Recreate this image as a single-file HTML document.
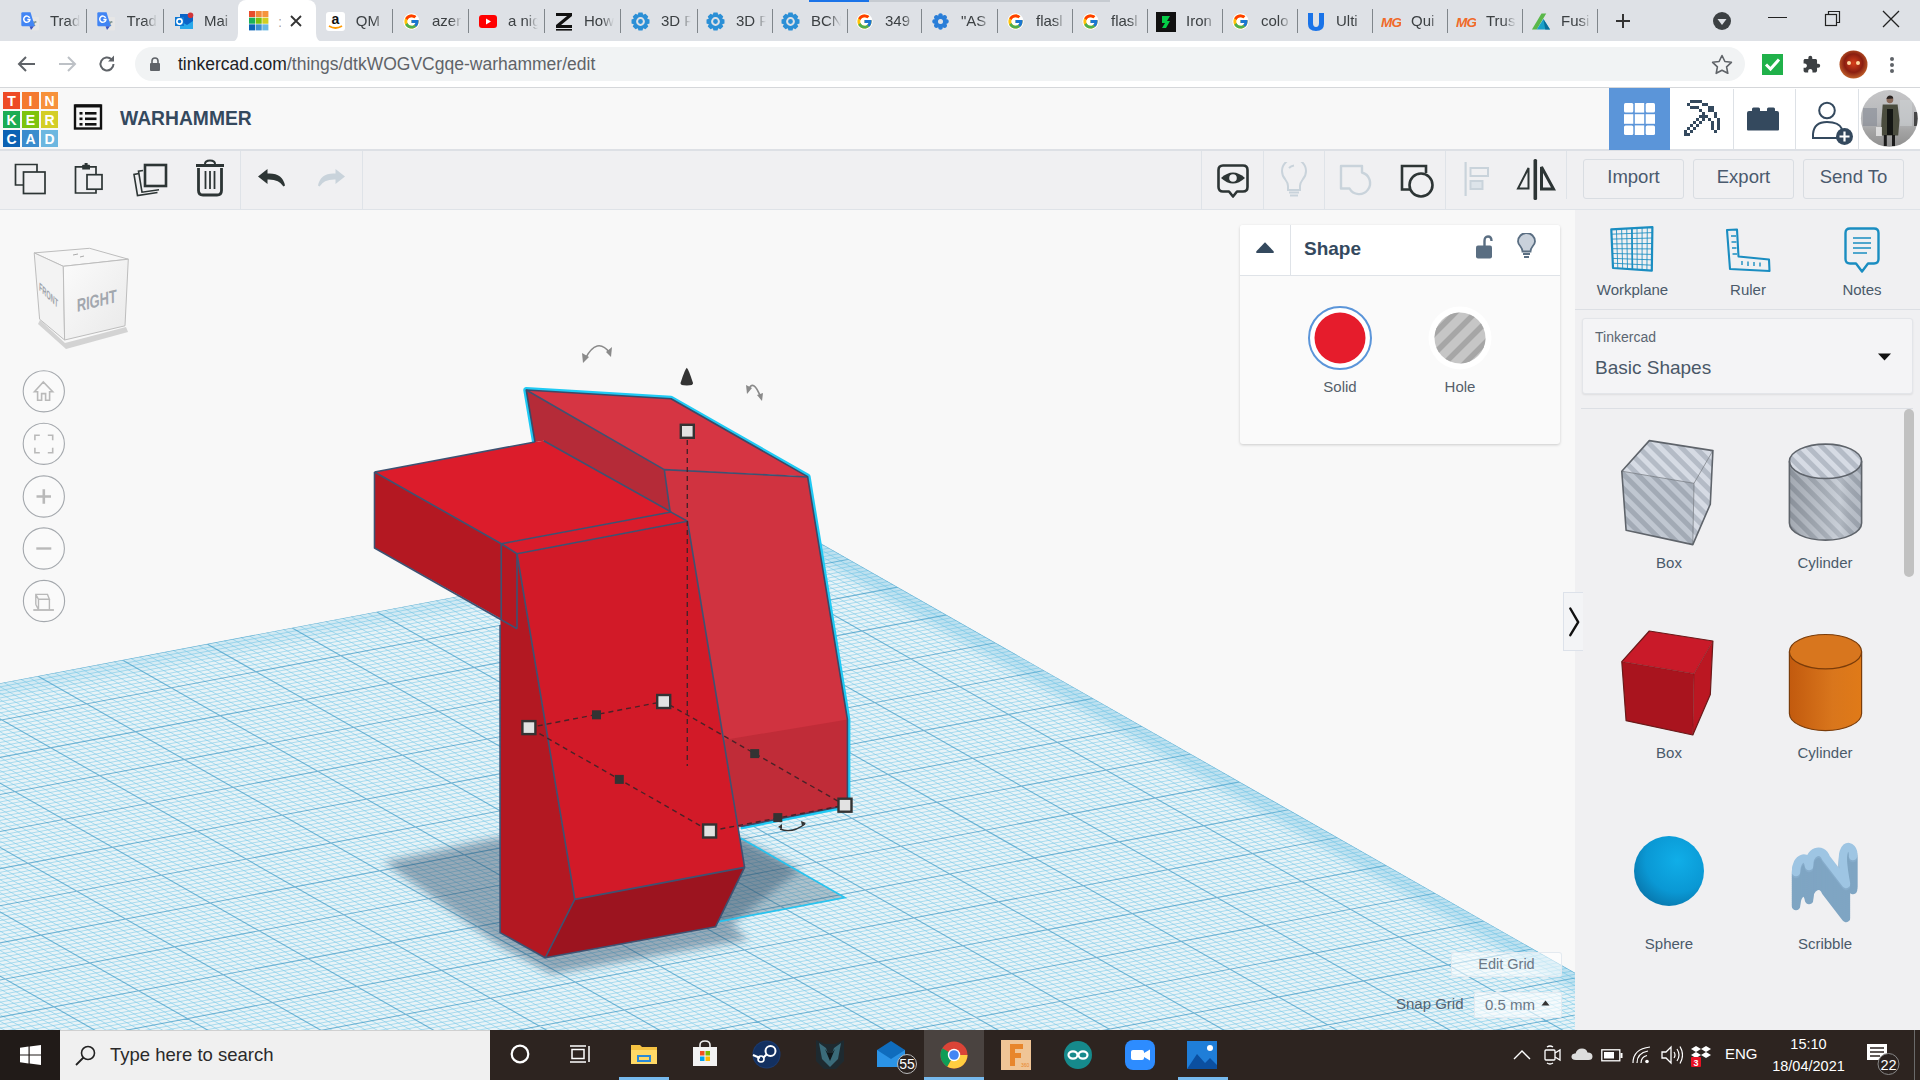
<!DOCTYPE html>
<html><head><meta charset="utf-8"><title>Tinkercad</title>
<style>
*{box-sizing:border-box}
html,body{margin:0;padding:0}
body{width:1920px;height:1080px;overflow:hidden;position:relative;font-family:"Liberation Sans",sans-serif;background:#f8f8f8;color:#333}
.a{position:absolute}
svg{display:block}
.tab{position:absolute;top:0;height:41px}
.tab .t{position:absolute;left:50px;top:12px;font-size:15px;color:#3c4043;white-space:nowrap;width:28px;overflow:hidden}
.tab .s{position:absolute;left:85px;top:13px;width:1px;height:18px;background:#7f8489}
.ico{position:absolute}
.lbl{position:absolute;font-size:15px;color:#4a5a6a;text-align:center;white-space:nowrap}
</style></head><body>

<div class="a" style="left:0;top:0;width:1920px;height:41px;background:#dee1e6"></div>
<div class="a" style="left:809px;top:0;width:60px;height:2px;background:#1a73e8"></div>
<div class="a" style="left:869px;top:0;width:241px;height:2px;background:#c6cbd1"></div>
<div class="a" style="left:238px;top:0;width:78px;height:42px;background:#fff;border-radius:8px 8px 0 0"></div>
<svg class="a" style="left:230px;top:33px" width="9" height="9"><path d="M0 9Q8 9 8 0V9z" fill="#fff"/></svg>
<svg class="a" style="left:315px;top:33px" width="9" height="9"><path d="M1 0Q1 9 9 9H1z" fill="#fff"/></svg>
<div class="a" style="left:19.5px;top:11px;width:20px;height:21px;display:flex;align-items:center;justify-content:center"><svg width="20" height="21" viewBox="0 0 20 21"><rect x="10" y="6" width="9" height="13.5" rx="1" fill="#e6e6e6"/><path d="M12 10.5l3 4.5M15.5 10.5l-3.5 5M11.5 11h5" stroke="#5f7a7a" stroke-width="0.9" fill="none"/><path d="M2.5 1.3H10.5L14.8 15.2H2.5Q1.3 15.2 1.3 14V2.5Q1.3 1.3 2.5 1.3Z" fill="#4285f4"/><path d="M9.5 15.2H14L11 19z" fill="#3b57c4"/><path d="M9.6 6.8A3.1 3.1 0 1 0 9.9 8.6H7.3" fill="none" stroke="#fff" stroke-width="1.5"/></svg></div>
<div class="a" style="left:50px;top:12px;width:30px;height:20px;overflow:hidden;font-size:15px;color:#3c4043;white-space:nowrap;-webkit-mask-image:linear-gradient(90deg,#000 60%,transparent 100%)">Trad</div>
<div class="a" style="left:86px;top:9px;width:1px;height:24px;background:#80868b"></div>
<div class="a" style="left:96.1px;top:11px;width:20px;height:21px;display:flex;align-items:center;justify-content:center"><svg width="20" height="21" viewBox="0 0 20 21"><rect x="10" y="6" width="9" height="13.5" rx="1" fill="#e6e6e6"/><path d="M12 10.5l3 4.5M15.5 10.5l-3.5 5M11.5 11h5" stroke="#5f7a7a" stroke-width="0.9" fill="none"/><path d="M2.5 1.3H10.5L14.8 15.2H2.5Q1.3 15.2 1.3 14V2.5Q1.3 1.3 2.5 1.3Z" fill="#4285f4"/><path d="M9.5 15.2H14L11 19z" fill="#3b57c4"/><path d="M9.6 6.8A3.1 3.1 0 1 0 9.9 8.6H7.3" fill="none" stroke="#fff" stroke-width="1.5"/></svg></div>
<div class="a" style="left:126.6px;top:12px;width:30px;height:20px;overflow:hidden;font-size:15px;color:#3c4043;white-space:nowrap;-webkit-mask-image:linear-gradient(90deg,#000 60%,transparent 100%)">Trad</div>
<div class="a" style="left:162.6px;top:9px;width:1px;height:24px;background:#80868b"></div>
<div class="a" style="left:173.5px;top:11px;width:20px;height:21px;display:flex;align-items:center;justify-content:center"><svg width="20" height="19" viewBox="0 0 20 19"><rect x="6" y="2" width="13" height="15" fill="#0a64c8"/><path d="M6 9l7 4 6-4v8H6z" fill="#28a8ea"/><rect x="1" y="5" width="9" height="9" fill="#0f78d4"/><circle cx="5.5" cy="9.5" r="2.6" fill="none" stroke="#fff" stroke-width="1.6"/><circle cx="16.5" cy="3.2" r="2.8" fill="#d13438"/></svg></div>
<div class="a" style="left:204px;top:12px;width:30px;height:20px;overflow:hidden;font-size:15px;color:#3c4043;white-space:nowrap;-webkit-mask-image:linear-gradient(90deg,#000 60%,transparent 100%)">Mai</div>
<div class="a" style="left:249px;top:11px"><svg width="20" height="20"><rect x="0.00" y="0.00" width="6.07" height="6.07" fill="#e84d2c"/><rect x="6.67" y="0.00" width="6.07" height="6.07" fill="#f38b3c"/><rect x="13.33" y="0.00" width="6.07" height="6.07" fill="#f6943c"/><rect x="0.00" y="6.67" width="6.07" height="6.07" fill="#1ab05a"/><rect x="6.67" y="6.67" width="6.07" height="6.07" fill="#79c00f"/><rect x="13.33" y="6.67" width="6.07" height="6.07" fill="#d2cd21"/><rect x="0.00" y="13.33" width="6.07" height="6.07" fill="#0b63b6"/><rect x="6.67" y="13.33" width="6.07" height="6.07" fill="#3c8fd1"/><rect x="13.33" y="13.33" width="6.07" height="6.07" fill="#6ab8e2"/></svg></div>
<div class="a" style="left:278px;top:13px;width:3px;height:16px;overflow:hidden;font-size:15px;color:#aaa">:</div>
<svg class="a" style="left:290px;top:15px" width="12" height="12"><path d="M1 1L11 11M11 1L1 11" stroke="#333" stroke-width="1.8"/></svg>
<div class="a" style="left:325.3px;top:11px;width:20px;height:21px;display:flex;align-items:center;justify-content:center"><svg width="19" height="19" viewBox="0 0 19 19"><rect x="0" y="0" width="19" height="19" rx="3" fill="#fff"/><text x="9.5" y="12" font-size="14" font-weight="bold" fill="#111" text-anchor="middle" font-family="Liberation Sans">a</text><path d="M3 14q6.5 4 13 0" stroke="#f90" stroke-width="1.8" fill="none"/></svg></div>
<div class="a" style="left:355.8px;top:12px;width:30px;height:20px;overflow:hidden;font-size:15px;color:#3c4043;white-space:nowrap;-webkit-mask-image:linear-gradient(90deg,#000 60%,transparent 100%)">QM</div>
<div class="a" style="left:391.8px;top:9px;width:1px;height:24px;background:#80868b"></div>
<div class="a" style="left:401.5px;top:11px;width:20px;height:21px;display:flex;align-items:center;justify-content:center"><svg width="17" height="17" viewBox="0 0 48 48"><circle cx="24" cy="24" r="23" fill="#fff"/><path d="M43.6 20.1H42V20H24v8h11.3C33.7 32.7 29.2 36 24 36c-6.6 0-12-5.4-12-12s5.4-12 12-12c3.1 0 5.8 1.2 7.9 3.1l5.7-5.7C34 6.1 29.3 4 24 4 13 4 4 13 4 24s9 20 20 20 20-9 20-20c0-1.3-.1-2.6-.4-3.9z" fill="#FFC107"/><path d="M6.3 14.7l6.6 4.8C14.7 15.1 19 12 24 12c3.1 0 5.8 1.2 7.9 3.1l5.7-5.7C34 6.1 29.3 4 24 4 16.3 4 9.7 8.3 6.3 14.7z" fill="#FF3D00"/><path d="M24 44c5.2 0 9.9-2 13.4-5.2l-6.2-5.2C29.2 35.1 26.7 36 24 36c-5.2 0-9.6-3.3-11.3-7.9l-6.5 5C9.5 39.6 16.2 44 24 44z" fill="#4CAF50"/><path d="M43.6 20.1H42V20H24v8h11.3c-.8 2.2-2.2 4.2-4.1 5.6l6.2 5.2C37 39.2 44 34 44 24c0-1.3-.1-2.6-.4-3.9z" fill="#1976D2"/></svg></div>
<div class="a" style="left:432px;top:12px;width:30px;height:20px;overflow:hidden;font-size:15px;color:#3c4043;white-space:nowrap;-webkit-mask-image:linear-gradient(90deg,#000 60%,transparent 100%)">azer</div>
<div class="a" style="left:468px;top:9px;width:1px;height:24px;background:#80868b"></div>
<div class="a" style="left:477.5px;top:11px;width:20px;height:21px;display:flex;align-items:center;justify-content:center"><svg width="18" height="13" viewBox="0 0 18 13"><rect width="18" height="13" rx="3" fill="#f00"/><path d="M7 3.5v6l5-3z" fill="#fff"/></svg></div>
<div class="a" style="left:508px;top:12px;width:30px;height:20px;overflow:hidden;font-size:15px;color:#3c4043;white-space:nowrap;-webkit-mask-image:linear-gradient(90deg,#000 60%,transparent 100%)">a nig</div>
<div class="a" style="left:544px;top:9px;width:1px;height:24px;background:#80868b"></div>
<div class="a" style="left:553.5px;top:11px;width:20px;height:21px;display:flex;align-items:center;justify-content:center"><svg width="18" height="20" viewBox="0 0 18 20"><path d="M1 1h16v3L6 13h11v3H1v-3L12 4H1z" fill="#111"/><rect x="1" y="17" width="16" height="1.6" fill="#111"/></svg></div>
<div class="a" style="left:584px;top:12px;width:30px;height:20px;overflow:hidden;font-size:15px;color:#3c4043;white-space:nowrap;-webkit-mask-image:linear-gradient(90deg,#000 60%,transparent 100%)">How</div>
<div class="a" style="left:620px;top:9px;width:1px;height:24px;background:#80868b"></div>
<div class="a" style="left:630.5px;top:11px;width:20px;height:21px;display:flex;align-items:center;justify-content:center"><svg width="19" height="19" viewBox="0 0 19 19"><polygon points="18.48,7.49 18.48,11.51 15.62,12.46 15.92,11.74 17.27,14.43 14.43,17.27 11.74,15.92 12.46,15.62 11.51,18.48 7.49,18.48 6.54,15.62 7.26,15.92 4.57,17.27 1.73,14.43 3.08,11.74 3.38,12.46 0.52,11.51 0.52,7.49 3.38,6.54 3.08,7.26 1.73,4.57 4.57,1.73 7.26,3.08 6.54,3.38 7.49,0.52 11.51,0.52 12.46,3.38 11.74,3.08 14.43,1.73 17.27,4.57 15.92,7.26 15.62,6.54" fill="#2b8fd6"/><circle cx="9.5" cy="9.5" r="3.4" fill="none" stroke="#dee1e6" stroke-width="2"/></svg></div>
<div class="a" style="left:661px;top:12px;width:30px;height:20px;overflow:hidden;font-size:15px;color:#3c4043;white-space:nowrap;-webkit-mask-image:linear-gradient(90deg,#000 60%,transparent 100%)">3D P</div>
<div class="a" style="left:697px;top:9px;width:1px;height:24px;background:#80868b"></div>
<div class="a" style="left:705.5px;top:11px;width:20px;height:21px;display:flex;align-items:center;justify-content:center"><svg width="19" height="19" viewBox="0 0 19 19"><polygon points="18.48,7.49 18.48,11.51 15.62,12.46 15.92,11.74 17.27,14.43 14.43,17.27 11.74,15.92 12.46,15.62 11.51,18.48 7.49,18.48 6.54,15.62 7.26,15.92 4.57,17.27 1.73,14.43 3.08,11.74 3.38,12.46 0.52,11.51 0.52,7.49 3.38,6.54 3.08,7.26 1.73,4.57 4.57,1.73 7.26,3.08 6.54,3.38 7.49,0.52 11.51,0.52 12.46,3.38 11.74,3.08 14.43,1.73 17.27,4.57 15.92,7.26 15.62,6.54" fill="#2b8fd6"/><circle cx="9.5" cy="9.5" r="3.4" fill="none" stroke="#dee1e6" stroke-width="2"/></svg></div>
<div class="a" style="left:736px;top:12px;width:30px;height:20px;overflow:hidden;font-size:15px;color:#3c4043;white-space:nowrap;-webkit-mask-image:linear-gradient(90deg,#000 60%,transparent 100%)">3D P</div>
<div class="a" style="left:772px;top:9px;width:1px;height:24px;background:#80868b"></div>
<div class="a" style="left:780.5px;top:11px;width:20px;height:21px;display:flex;align-items:center;justify-content:center"><svg width="19" height="19" viewBox="0 0 19 19"><polygon points="18.48,7.49 18.48,11.51 15.62,12.46 15.92,11.74 17.27,14.43 14.43,17.27 11.74,15.92 12.46,15.62 11.51,18.48 7.49,18.48 6.54,15.62 7.26,15.92 4.57,17.27 1.73,14.43 3.08,11.74 3.38,12.46 0.52,11.51 0.52,7.49 3.38,6.54 3.08,7.26 1.73,4.57 4.57,1.73 7.26,3.08 6.54,3.38 7.49,0.52 11.51,0.52 12.46,3.38 11.74,3.08 14.43,1.73 17.27,4.57 15.92,7.26 15.62,6.54" fill="#2b8fd6"/><circle cx="9.5" cy="9.5" r="3.4" fill="none" stroke="#dee1e6" stroke-width="2"/></svg></div>
<div class="a" style="left:811px;top:12px;width:30px;height:20px;overflow:hidden;font-size:15px;color:#3c4043;white-space:nowrap;-webkit-mask-image:linear-gradient(90deg,#000 60%,transparent 100%)">BCN</div>
<div class="a" style="left:847px;top:9px;width:1px;height:24px;background:#80868b"></div>
<div class="a" style="left:854.5px;top:11px;width:20px;height:21px;display:flex;align-items:center;justify-content:center"><svg width="17" height="17" viewBox="0 0 48 48"><circle cx="24" cy="24" r="23" fill="#fff"/><path d="M43.6 20.1H42V20H24v8h11.3C33.7 32.7 29.2 36 24 36c-6.6 0-12-5.4-12-12s5.4-12 12-12c3.1 0 5.8 1.2 7.9 3.1l5.7-5.7C34 6.1 29.3 4 24 4 13 4 4 13 4 24s9 20 20 20 20-9 20-20c0-1.3-.1-2.6-.4-3.9z" fill="#FFC107"/><path d="M6.3 14.7l6.6 4.8C14.7 15.1 19 12 24 12c3.1 0 5.8 1.2 7.9 3.1l5.7-5.7C34 6.1 29.3 4 24 4 16.3 4 9.7 8.3 6.3 14.7z" fill="#FF3D00"/><path d="M24 44c5.2 0 9.9-2 13.4-5.2l-6.2-5.2C29.2 35.1 26.7 36 24 36c-5.2 0-9.6-3.3-11.3-7.9l-6.5 5C9.5 39.6 16.2 44 24 44z" fill="#4CAF50"/><path d="M43.6 20.1H42V20H24v8h11.3c-.8 2.2-2.2 4.2-4.1 5.6l6.2 5.2C37 39.2 44 34 44 24c0-1.3-.1-2.6-.4-3.9z" fill="#1976D2"/></svg></div>
<div class="a" style="left:885px;top:12px;width:30px;height:20px;overflow:hidden;font-size:15px;color:#3c4043;white-space:nowrap;-webkit-mask-image:linear-gradient(90deg,#000 60%,transparent 100%)">349</div>
<div class="a" style="left:921px;top:9px;width:1px;height:24px;background:#80868b"></div>
<div class="a" style="left:930.5px;top:11px;width:20px;height:21px;display:flex;align-items:center;justify-content:center"><svg width="19" height="19" viewBox="0 0 19 19"><ellipse cx="14.50" cy="9.50" rx="3.2" ry="2.4" transform="rotate(0 14.50 9.50)" fill="#2a7ed8"/><ellipse cx="13.04" cy="13.04" rx="3.2" ry="2.4" transform="rotate(45 13.04 13.04)" fill="#2a7ed8"/><ellipse cx="9.50" cy="14.50" rx="3.2" ry="2.4" transform="rotate(90 9.50 14.50)" fill="#2a7ed8"/><ellipse cx="5.96" cy="13.04" rx="3.2" ry="2.4" transform="rotate(135 5.96 13.04)" fill="#2a7ed8"/><ellipse cx="4.50" cy="9.50" rx="3.2" ry="2.4" transform="rotate(180 4.50 9.50)" fill="#2a7ed8"/><ellipse cx="5.96" cy="5.96" rx="3.2" ry="2.4" transform="rotate(225 5.96 5.96)" fill="#2a7ed8"/><ellipse cx="9.50" cy="4.50" rx="3.2" ry="2.4" transform="rotate(270 9.50 4.50)" fill="#2a7ed8"/><ellipse cx="13.04" cy="5.96" rx="3.2" ry="2.4" transform="rotate(315 13.04 5.96)" fill="#2a7ed8"/><circle cx="9.5" cy="9.5" r="2.5" fill="#dee1e6"/></svg></div>
<div class="a" style="left:961px;top:12px;width:30px;height:20px;overflow:hidden;font-size:15px;color:#3c4043;white-space:nowrap;-webkit-mask-image:linear-gradient(90deg,#000 60%,transparent 100%)">"AS</div>
<div class="a" style="left:997px;top:9px;width:1px;height:24px;background:#80868b"></div>
<div class="a" style="left:1005.5px;top:11px;width:20px;height:21px;display:flex;align-items:center;justify-content:center"><svg width="17" height="17" viewBox="0 0 48 48"><circle cx="24" cy="24" r="23" fill="#fff"/><path d="M43.6 20.1H42V20H24v8h11.3C33.7 32.7 29.2 36 24 36c-6.6 0-12-5.4-12-12s5.4-12 12-12c3.1 0 5.8 1.2 7.9 3.1l5.7-5.7C34 6.1 29.3 4 24 4 13 4 4 13 4 24s9 20 20 20 20-9 20-20c0-1.3-.1-2.6-.4-3.9z" fill="#FFC107"/><path d="M6.3 14.7l6.6 4.8C14.7 15.1 19 12 24 12c3.1 0 5.8 1.2 7.9 3.1l5.7-5.7C34 6.1 29.3 4 24 4 16.3 4 9.7 8.3 6.3 14.7z" fill="#FF3D00"/><path d="M24 44c5.2 0 9.9-2 13.4-5.2l-6.2-5.2C29.2 35.1 26.7 36 24 36c-5.2 0-9.6-3.3-11.3-7.9l-6.5 5C9.5 39.6 16.2 44 24 44z" fill="#4CAF50"/><path d="M43.6 20.1H42V20H24v8h11.3c-.8 2.2-2.2 4.2-4.1 5.6l6.2 5.2C37 39.2 44 34 44 24c0-1.3-.1-2.6-.4-3.9z" fill="#1976D2"/></svg></div>
<div class="a" style="left:1036px;top:12px;width:30px;height:20px;overflow:hidden;font-size:15px;color:#3c4043;white-space:nowrap;-webkit-mask-image:linear-gradient(90deg,#000 60%,transparent 100%)">flasl</div>
<div class="a" style="left:1072px;top:9px;width:1px;height:24px;background:#80868b"></div>
<div class="a" style="left:1080.5px;top:11px;width:20px;height:21px;display:flex;align-items:center;justify-content:center"><svg width="17" height="17" viewBox="0 0 48 48"><circle cx="24" cy="24" r="23" fill="#fff"/><path d="M43.6 20.1H42V20H24v8h11.3C33.7 32.7 29.2 36 24 36c-6.6 0-12-5.4-12-12s5.4-12 12-12c3.1 0 5.8 1.2 7.9 3.1l5.7-5.7C34 6.1 29.3 4 24 4 13 4 4 13 4 24s9 20 20 20 20-9 20-20c0-1.3-.1-2.6-.4-3.9z" fill="#FFC107"/><path d="M6.3 14.7l6.6 4.8C14.7 15.1 19 12 24 12c3.1 0 5.8 1.2 7.9 3.1l5.7-5.7C34 6.1 29.3 4 24 4 16.3 4 9.7 8.3 6.3 14.7z" fill="#FF3D00"/><path d="M24 44c5.2 0 9.9-2 13.4-5.2l-6.2-5.2C29.2 35.1 26.7 36 24 36c-5.2 0-9.6-3.3-11.3-7.9l-6.5 5C9.5 39.6 16.2 44 24 44z" fill="#4CAF50"/><path d="M43.6 20.1H42V20H24v8h11.3c-.8 2.2-2.2 4.2-4.1 5.6l6.2 5.2C37 39.2 44 34 44 24c0-1.3-.1-2.6-.4-3.9z" fill="#1976D2"/></svg></div>
<div class="a" style="left:1111px;top:12px;width:30px;height:20px;overflow:hidden;font-size:15px;color:#3c4043;white-space:nowrap;-webkit-mask-image:linear-gradient(90deg,#000 60%,transparent 100%)">flasl</div>
<div class="a" style="left:1147px;top:9px;width:1px;height:24px;background:#80868b"></div>
<div class="a" style="left:1155.5px;top:11px;width:20px;height:21px;display:flex;align-items:center;justify-content:center"><svg width="20" height="20" viewBox="0 0 20 20"><rect width="20" height="20" fill="#111"/><path d="M6 4h8l-3 5h3l-4 7H6l3-5H6z" fill="#05cc47"/></svg></div>
<div class="a" style="left:1186px;top:12px;width:30px;height:20px;overflow:hidden;font-size:15px;color:#3c4043;white-space:nowrap;-webkit-mask-image:linear-gradient(90deg,#000 60%,transparent 100%)">Iron</div>
<div class="a" style="left:1222px;top:9px;width:1px;height:24px;background:#80868b"></div>
<div class="a" style="left:1230.5px;top:11px;width:20px;height:21px;display:flex;align-items:center;justify-content:center"><svg width="17" height="17" viewBox="0 0 48 48"><circle cx="24" cy="24" r="23" fill="#fff"/><path d="M43.6 20.1H42V20H24v8h11.3C33.7 32.7 29.2 36 24 36c-6.6 0-12-5.4-12-12s5.4-12 12-12c3.1 0 5.8 1.2 7.9 3.1l5.7-5.7C34 6.1 29.3 4 24 4 13 4 4 13 4 24s9 20 20 20 20-9 20-20c0-1.3-.1-2.6-.4-3.9z" fill="#FFC107"/><path d="M6.3 14.7l6.6 4.8C14.7 15.1 19 12 24 12c3.1 0 5.8 1.2 7.9 3.1l5.7-5.7C34 6.1 29.3 4 24 4 16.3 4 9.7 8.3 6.3 14.7z" fill="#FF3D00"/><path d="M24 44c5.2 0 9.9-2 13.4-5.2l-6.2-5.2C29.2 35.1 26.7 36 24 36c-5.2 0-9.6-3.3-11.3-7.9l-6.5 5C9.5 39.6 16.2 44 24 44z" fill="#4CAF50"/><path d="M43.6 20.1H42V20H24v8h11.3c-.8 2.2-2.2 4.2-4.1 5.6l6.2 5.2C37 39.2 44 34 44 24c0-1.3-.1-2.6-.4-3.9z" fill="#1976D2"/></svg></div>
<div class="a" style="left:1261px;top:12px;width:30px;height:20px;overflow:hidden;font-size:15px;color:#3c4043;white-space:nowrap;-webkit-mask-image:linear-gradient(90deg,#000 60%,transparent 100%)">colo</div>
<div class="a" style="left:1297px;top:9px;width:1px;height:24px;background:#80868b"></div>
<div class="a" style="left:1305.5px;top:11px;width:20px;height:21px;display:flex;align-items:center;justify-content:center"><svg width="20" height="20" viewBox="0 0 20 20"><path d="M2 1h5v10q0 4 3 4t3-4V1h5v11q0 7-8 7T2 12z" fill="#1a73e8"/></svg></div>
<div class="a" style="left:1336px;top:12px;width:30px;height:20px;overflow:hidden;font-size:15px;color:#3c4043;white-space:nowrap;-webkit-mask-image:linear-gradient(90deg,#000 60%,transparent 100%)">Ulti</div>
<div class="a" style="left:1372px;top:9px;width:1px;height:24px;background:#80868b"></div>
<div class="a" style="left:1380.5px;top:11px;width:20px;height:21px;display:flex;align-items:center;justify-content:center"><svg width="22" height="16" viewBox="0 0 22 16"><text x="0" y="14" font-size="15" font-weight="bold" font-style="italic" fill="#f06a2a" font-family="Liberation Sans" letter-spacing="-1">MG</text></svg></div>
<div class="a" style="left:1411px;top:12px;width:30px;height:20px;overflow:hidden;font-size:15px;color:#3c4043;white-space:nowrap;-webkit-mask-image:linear-gradient(90deg,#000 60%,transparent 100%)">Qui</div>
<div class="a" style="left:1447px;top:9px;width:1px;height:24px;background:#80868b"></div>
<div class="a" style="left:1455.5px;top:11px;width:20px;height:21px;display:flex;align-items:center;justify-content:center"><svg width="22" height="16" viewBox="0 0 22 16"><text x="0" y="14" font-size="15" font-weight="bold" font-style="italic" fill="#f06a2a" font-family="Liberation Sans" letter-spacing="-1">MG</text></svg></div>
<div class="a" style="left:1486px;top:12px;width:30px;height:20px;overflow:hidden;font-size:15px;color:#3c4043;white-space:nowrap;-webkit-mask-image:linear-gradient(90deg,#000 60%,transparent 100%)">Trus</div>
<div class="a" style="left:1522px;top:9px;width:1px;height:24px;background:#80868b"></div>
<div class="a" style="left:1530.5px;top:11px;width:20px;height:21px;display:flex;align-items:center;justify-content:center"><svg width="21" height="19" viewBox="0 0 21 19"><path d="M1 18L11 1h5L6 18z" fill="#5ab84a"/><path d="M6 18l7-11 7 11z" fill="#1aa0c8"/><path d="M13 7l7 11h-5z" fill="#0a6e9a"/></svg></div>
<div class="a" style="left:1561px;top:12px;width:30px;height:20px;overflow:hidden;font-size:15px;color:#3c4043;white-space:nowrap;-webkit-mask-image:linear-gradient(90deg,#000 60%,transparent 100%)">Fusi</div>
<div class="a" style="left:1597px;top:9px;width:1px;height:24px;background:#80868b"></div>
<svg class="a" style="left:1615px;top:13px" width="16" height="16"><path d="M8 1V15M1 8H15" stroke="#333" stroke-width="2"/></svg>
<svg class="a" style="left:1712px;top:11px" width="20" height="20"><circle cx="10" cy="10" r="9" fill="#3c4043"/><path d="M5.5 8h9L10 14z" fill="#dee1e6"/></svg>
<div class="a" style="left:1768px;top:17px;width:19px;height:1px;background:#222"></div>
<svg class="a" style="left:1824px;top:10px" width="18" height="18"><rect x="1.5" y="4.5" width="11" height="11" fill="none" stroke="#222" stroke-width="1.2"/><path d="M4.5 4.5V1.5H15.5V12.5H12.5" fill="none" stroke="#222" stroke-width="1.2"/></svg>
<svg class="a" style="left:1882px;top:10px" width="18" height="18"><path d="M1 1L17 17M17 1L1 17" stroke="#222" stroke-width="1.3"/></svg>
<div class="a" style="left:0;top:41px;width:1920px;height:46px;background:#fff"></div>
<div class="a" style="left:0;top:87px;width:1920px;height:1px;background:#d5d7da"></div>
<svg class="a" style="left:17px;top:54px" width="20" height="20"><path d="M18 10H3M9 3L2 10L9 17" fill="none" stroke="#5f6368" stroke-width="2"/></svg>
<svg class="a" style="left:57px;top:54px" width="20" height="20"><path d="M2 10H17M11 3L18 10L11 17" fill="none" stroke="#bdc1c6" stroke-width="2"/></svg>
<svg class="a" style="left:97px;top:54px" width="20" height="20"><path d="M16.5 10A6.5 6.5 0 1 1 14.6 5.4" fill="none" stroke="#5f6368" stroke-width="2"/><path d="M17 1.5V7.5H11z" fill="#5f6368"/></svg>
<div class="a" style="left:135px;top:47px;width:1610px;height:34px;border-radius:17px;background:#f1f3f4"></div>
<svg class="a" style="left:149px;top:56px" width="12" height="15"><path d="M3 7V5a3 3 0 0 1 6 0V7" fill="none" stroke="#5f6368" stroke-width="1.6"/><rect x="1" y="7" width="10" height="8" rx="1" fill="#5f6368"/></svg>
<div class="a" style="left:178px;top:54px;font-size:17.5px;color:#202124;white-space:nowrap;letter-spacing:0px">tinkercad.com<span style="color:#5f6368">/things/dtkWOGVCgqe-warhammer/edit</span></div>
<svg class="a" style="left:1711px;top:54px" width="22" height="21"><path d="M11 1.5l2.9 6 6.5.8-4.8 4.5 1.2 6.5L11 16.2l-5.8 3.1 1.2-6.5L1.6 8.3l6.5-.8z" fill="none" stroke="#5f6368" stroke-width="1.6" stroke-linejoin="round"/></svg>
<svg class="a" style="left:1762px;top:54px" width="21" height="21"><rect width="21" height="21" fill="#20b14a"/><path d="M4 10.5l4.5 4.5L17 5.5" fill="none" stroke="#fff" stroke-width="3"/></svg>
<svg class="a" style="left:1802px;top:55px" width="19" height="19" viewBox="0 0 24 24"><path d="M20.5 11H19V7c0-1.1-.9-2-2-2h-4V3.5a2.5 2.5 0 0 0-5 0V5H4c-1.1 0-2 .9-2 2v3.8h1.5c1.5 0 2.7 1.2 2.7 2.7S5 16.2 3.5 16.2H2V20c0 1.1.9 2 2 2h3.8v-1.5c0-1.5 1.2-2.7 2.7-2.7s2.7 1.2 2.7 2.7V22H17c1.1 0 2-.9 2-2v-4h1.5a2.5 2.5 0 0 0 0-5z" fill="#3c4043"/></svg>
<svg class="a" style="left:1839px;top:50px" width="29" height="29"><defs><radialGradient id="av" cx="50%" cy="45%" r="55%"><stop offset="0" stop-color="#d9401a"/><stop offset="0.6" stop-color="#8a1e10"/><stop offset="1" stop-color="#c0602a"/></radialGradient></defs><circle cx="14.5" cy="14.5" r="14" fill="url(#av)"/><circle cx="10" cy="13" r="2" fill="#ffd9a0"/><circle cx="19" cy="13" r="2" fill="#ffd9a0"/></svg>
<svg class="a" style="left:1889px;top:56px" width="6" height="18"><circle cx="3" cy="3" r="2" fill="#5f6368"/><circle cx="3" cy="9" r="2" fill="#5f6368"/><circle cx="3" cy="15" r="2" fill="#5f6368"/></svg>
<!-- Tinkercad header -->
<div class="a" style="left:0;top:88px;width:1920px;height:62px;background:#f8f8f8"></div>
<div class="a" style="left:1670px;top:88px;width:250px;height:62px;background:#fff"></div>
<div class="a" style="left:0;top:149px;width:1920px;height:2px;background:#dde0e5"></div>
<svg class="a" style="left:3px;top:92px" width="55" height="55" viewBox="0 0 55 55">
<rect x="0" y="0" width="17" height="17" fill="#ee4a25"/><rect x="19" y="0" width="17" height="17" fill="#f47a30"/><rect x="38" y="0" width="17" height="17" fill="#f7923b"/>
<rect x="0" y="19" width="17" height="17" fill="#1bac54"/><rect x="19" y="19" width="17" height="17" fill="#7ec30d"/><rect x="38" y="19" width="17" height="17" fill="#d4ce27"/>
<rect x="0" y="38" width="17" height="17" fill="#0b62b4"/><rect x="19" y="38" width="17" height="17" fill="#3b8ccd"/><rect x="38" y="38" width="17" height="17" fill="#6db7e0"/>
<g font-family="Liberation Sans" font-weight="bold" font-size="14" fill="#fff" text-anchor="middle">
<text x="8.5" y="13.5">T</text><text x="27.5" y="13.5">I</text><text x="46.5" y="13.5">N</text>
<text x="8.5" y="32.5">K</text><text x="27.5" y="32.5">E</text><text x="46.5" y="32.5">R</text>
<text x="8.5" y="51.5">C</text><text x="27.5" y="51.5">A</text><text x="46.5" y="51.5">D</text></g>
</svg>
<svg class="a" style="left:73px;top:103px" width="30" height="28" viewBox="0 0 30 28">
<rect x="2" y="2.5" width="26" height="23" fill="none" stroke="#111" stroke-width="2.4"/><rect x="2" y="1.5" width="26" height="3" fill="#111"/>
<rect x="6.5" y="9" width="3" height="2.6" fill="#111"/><rect x="12" y="9" width="11.5" height="2.6" fill="#111"/>
<rect x="6.5" y="14.5" width="3" height="2.6" fill="#111"/><rect x="12" y="14.5" width="11.5" height="2.6" fill="#111"/>
<rect x="6.5" y="20" width="3" height="2.6" fill="#111"/><rect x="12" y="20" width="11.5" height="2.6" fill="#111"/>
</svg>
<div class="a" style="left:120px;top:108px;font-size:19.3px;font-weight:bold;color:#34495e;letter-spacing:0px;white-space:nowrap">WARHAMMER</div>
<!-- right icons -->
<div class="a" style="left:1609px;top:88px;width:61px;height:62px;background:#5b95d9"></div>
<svg class="a" style="left:1624px;top:103px" width="31" height="32" viewBox="0 0 31 32">
<g fill="#fff"><rect x="0" y="0" width="9.3" height="9.6" rx="1.5"/><rect x="10.8" y="0" width="9.4" height="9.6"/><rect x="21.7" y="0" width="9.3" height="9.6" rx="1.5"/>
<rect x="0" y="11.2" width="9.3" height="9.6"/><rect x="10.8" y="11.2" width="9.4" height="9.6"/><rect x="21.7" y="11.2" width="9.3" height="9.6"/>
<rect x="0" y="22.4" width="9.3" height="9.6" rx="1.5"/><rect x="10.8" y="22.4" width="9.4" height="9.6"/><rect x="21.7" y="22.4" width="9.3" height="9.6" rx="1.5"/></g>
</svg>
<svg class="a" style="left:1683.5px;top:100.3px" width="36" height="36" viewBox="0 0 36 36" shape-rendering="crispEdges"><g fill="#34495e"><rect x="6" y="0" width="3" height="3"/><rect x="9" y="0" width="3" height="3"/><rect x="12" y="0" width="3" height="3"/><rect x="15" y="0" width="3" height="3"/><rect x="3" y="3" width="3" height="3"/><rect x="18" y="3" width="3" height="3"/><rect x="21" y="3" width="3" height="3"/><rect x="6" y="6" width="3" height="3"/><rect x="9" y="6" width="3" height="3"/><rect x="12" y="6" width="3" height="3"/><rect x="24" y="6" width="3" height="3"/><rect x="27" y="6" width="3" height="3"/><rect x="15" y="9" width="3" height="3"/><rect x="24" y="9" width="3" height="3"/><rect x="27" y="9" width="3" height="3"/><rect x="18" y="12" width="3" height="3"/><rect x="30" y="12" width="3" height="3"/><rect x="15" y="15" width="3" height="3"/><rect x="18" y="15" width="3" height="3"/><rect x="21" y="15" width="3" height="3"/><rect x="30" y="15" width="3" height="3"/><rect x="12" y="18" width="3" height="3"/><rect x="18" y="18" width="3" height="3"/><rect x="24" y="18" width="3" height="3"/><rect x="33" y="18" width="3" height="3"/><rect x="9" y="21" width="3" height="3"/><rect x="15" y="21" width="3" height="3"/><rect x="27" y="21" width="3" height="3"/><rect x="33" y="21" width="3" height="3"/><rect x="6" y="24" width="3" height="3"/><rect x="12" y="24" width="3" height="3"/><rect x="27" y="24" width="3" height="3"/><rect x="33" y="24" width="3" height="3"/><rect x="3" y="27" width="3" height="3"/><rect x="9" y="27" width="3" height="3"/><rect x="27" y="27" width="3" height="3"/><rect x="33" y="27" width="3" height="3"/><rect x="0" y="30" width="3" height="3"/><rect x="6" y="30" width="3" height="3"/><rect x="30" y="30" width="3" height="3"/><rect x="0" y="33" width="3" height="3"/><rect x="3" y="33" width="3" height="3"/></g></svg>
<div class="a" style="left:1733px;top:89px;width:1px;height:60px;background:#dde1e6"></div>
<svg class="a" style="left:1747px;top:105px" width="33" height="27" viewBox="0 0 33 27">
<path d="M5 4q0-1.5 1.5-1.5h5q1.5 0 1.5 1.5v2h7v-2q0-1.5 1.5-1.5h5q1.5 0 1.5 1.5v2h2q2 0 2 2v16.5q0 1-1 1H1q-1 0-1-1V8q0-2 2-2h3z" fill="#34495e"/></svg>
<div class="a" style="left:1795px;top:89px;width:1px;height:60px;background:#dde1e6"></div>
<svg class="a" style="left:1811px;top:100px" width="44" height="46" viewBox="0 0 44 46">
<circle cx="16" cy="10.5" r="7.8" fill="none" stroke="#34495e" stroke-width="2"/>
<path d="M31 29Q28 22 16 22Q3 22 2 34v4h24" fill="none" stroke="#34495e" stroke-width="2"/>
<circle cx="33.5" cy="36.5" r="8.5" fill="#34495e"/><path d="M33.5 31.5v10M28.5 36.5h10" stroke="#fff" stroke-width="2.2"/></svg>
<div class="a" style="left:1858px;top:89px;width:1px;height:60px;background:#dde1e6"></div>
<svg class="a" style="left:1860px;top:90px" width="58" height="58" viewBox="0 0 58 58">
<defs><clipPath id="avc"><circle cx="29.3" cy="28.4" r="28.4"/></clipPath>
<linearGradient id="avg" x1="0" y1="0" x2="0" y2="1"><stop offset="0" stop-color="#c6c6c8"/><stop offset="0.55" stop-color="#b4b5b8"/><stop offset="0.7" stop-color="#a4a4a4"/><stop offset="1" stop-color="#8e8e8e"/></linearGradient></defs>
<g clip-path="url(#avc)"><rect width="58" height="58" fill="url(#avg)"/>
<rect x="3" y="18" width="14" height="18" fill="#7f8590" opacity="0.55"/><rect x="40" y="10" width="12" height="26" fill="#d0d3d6" opacity="0.5"/><rect x="54" y="22" width="4" height="14" fill="#2a2a2a" opacity="0.8"/>
<path d="M22.7,14.6L37.6,14.6L39.5,30L38.2,45.6L21,45.6L21.5,30Z" fill="#4a4c3e"/>
<rect x="27" y="19" width="6" height="26" fill="#141614"/>
<rect x="23.8" y="45" width="3" height="11" fill="#1a1a1a"/><rect x="32" y="45" width="3" height="11" fill="#1a1a1a"/>
<circle cx="29.9" cy="9.8" r="3.4" fill="#8a6a5a"/><path d="M26.5,9Q27,5.5 30,5.5Q33,5.5 33.3,8.5Z" fill="#2a2220"/>
<rect x="16" y="37" width="6" height="9" fill="#e8e8e8" opacity="0.8"/></g></svg>
<!-- toolbar -->
<div class="a" style="left:0;top:151px;width:1920px;height:58px;background:#f0f0f2"></div>
<div class="a" style="left:0;top:209px;width:1920px;height:1px;background:#dfe3e8"></div>
<svg class="a" style="left:14px;top:163px" width="33" height="32" viewBox="0 0 33 32">
<g fill="none" stroke="#2d3535" stroke-width="1.7"><path d="M9.5 22H1.5V1.5H23V9"/><rect x="9.5" y="9" width="21.5" height="21.5"/></g></svg>
<svg class="a" style="left:74px;top:163px" width="30" height="32" viewBox="0 0 30 32">
<g fill="none" stroke="#2d3535" stroke-width="1.7"><path d="M9 3.8H1.5V30H22V26.2M22 11.7V3.8H15"/><rect x="13" y="11.7" width="15" height="14.5"/></g>
<path d="M8.2 2.6Q8.2 1.8 9 1.8H15.2Q16 1.8 16 2.6V6.5H8.2z" fill="#2d3535"/><rect x="10.6" y="0" width="3" height="2.5" fill="#2d3535"/></svg>
<svg class="a" style="left:133px;top:163px" width="36" height="35" viewBox="0 0 36 35">
<g fill="none" stroke="#2d3535" stroke-width="1.6"><path d="M6 10.5L1 11.5l3.5 21 20-3"/><path d="M10 7.5l-4.5.7 3.5 21 17-2.5"/></g>
<rect x="12" y="2" width="21" height="21" fill="#f0f0f2" stroke="#2d3535" stroke-width="2.6"/></svg>
<svg class="a" style="left:195px;top:159px" width="30" height="38" viewBox="0 0 30 38">
<g fill="none" stroke="#2d3535"><path d="M10 5q0-3.5 5-3.5t5 3.5" stroke-width="2"/><path d="M1 6.5h28" stroke-width="3"/>
<path d="M3.5 9v22.5q0 4.5 4.5 4.5h14q4.5 0 4.5-4.5V9" stroke-width="2.8"/><path d="M10.5 12v18M15 12v18M19.5 12v18" stroke-width="1.8"/></g></svg>
<div class="a" style="left:240px;top:151px;width:1px;height:58px;background:#dfe3e8"></div>
<svg class="a" style="left:258px;top:169px" width="28" height="18" viewBox="0 0 28 18">
<path d="M0 7.5L9.5 0v4.5q15-1 17.5 12l-1.5 1Q21 10 9.5 10.5V15z" fill="#2d3535"/></svg>
<svg class="a" style="left:317px;top:169px" width="28" height="18" viewBox="0 0 28 18">
<path d="M28 7.5L18.5 0v4.5q-15-1-17.5 12l1.5 1Q7 10 18.5 10.5V15z" fill="#c9d3db"/></svg>
<div class="a" style="left:362px;top:151px;width:1px;height:58px;background:#dfe3e8"></div>
<div class="a" style="left:1201px;top:151px;width:1px;height:58px;background:#dfe3e8"></div>
<div class="a" style="left:1263px;top:151px;width:1px;height:58px;background:#dfe3e8"></div>
<div class="a" style="left:1324px;top:151px;width:1px;height:58px;background:#dfe3e8"></div>
<div class="a" style="left:1445px;top:151px;width:1px;height:58px;background:#dfe3e8"></div>
<div class="a" style="left:1566px;top:151px;width:1px;height:48px;background:#dfe3e8"></div>
<svg class="a" style="left:1216px;top:163px" width="34" height="36" viewBox="0 0 34 36">
<path d="M7 2.5h20q4.5 0 4.5 4.5v17q0 4.5-4.5 4.5h-6L17 33.5 13 28.5H7q-4.5 0-4.5-4.5V7Q2.5 2.5 7 2.5z" fill="none" stroke="#2d3535" stroke-width="2.6" stroke-linejoin="round"/>
<path d="M5 15q12-11 24 0q-12 11-24 0z" fill="#2d3535"/><circle cx="17" cy="15" r="3.8" fill="#f0f0f2"/></svg>
<svg class="a" style="left:1280px;top:162px" width="28" height="36" viewBox="0 0 28 36">
<g fill="none" stroke="#c9d3db" stroke-width="2"><path d="M8 28v-4q0-3-3-7-3-3.5-3-8a12 12 0 0 1 24 0q0 4.5-3 8-3 4-3 7v4z"/><path d="M9 30.5h10M10 33.5h8"/><path d="M9 6q2-2 5-2.5"/></g></svg>
<svg class="a" style="left:1339px;top:164px" width="34" height="34" viewBox="0 0 34 34">
<path d="M2 2h21v6.5a11 11 0 1 1-12.5 16H2z" fill="none" stroke="#c9d3db" stroke-width="2.4" stroke-linejoin="round"/></svg>
<svg class="a" style="left:1400px;top:164px" width="36" height="35" viewBox="0 0 36 35">
<g fill="none" stroke="#2d3535" stroke-width="2.6"><path d="M10 25.5H2V2h24v7"/><circle cx="21" cy="21" r="11.5"/></g></svg>
<svg class="a" style="left:1462px;top:161px" width="34" height="36" viewBox="0 0 34 36">
<rect x="2.5" y="1" width="2.2" height="34" fill="#c9d3db"/><rect x="8.5" y="7" width="17.5" height="8" fill="none" stroke="#c9d3db" stroke-width="2"/><rect x="8.5" y="20" width="12" height="8" fill="#dde4ea" stroke="#c9d3db" stroke-width="2"/></svg>
<svg class="a" style="left:1516px;top:159px" width="40" height="41" viewBox="0 0 40 41">
<rect x="17.5" y="0" width="3.6" height="41" rx="1.5" fill="#2d3535"/><path d="M12.5 9L2 29.5h10.5z" fill="none" stroke="#2d3535" stroke-width="2"/><path d="M25.5 8L37.5 30H25.5z" fill="none" stroke="#2d3535" stroke-width="3"/></svg>
<div class="a" style="left:1583px;top:159px;width:101px;height:40px;border:1px solid #d9dde2;border-radius:3px;font-size:18.5px;color:#4a5a6e;text-align:center;line-height:34px">Import</div>
<div class="a" style="left:1693px;top:159px;width:101px;height:40px;border:1px solid #d9dde2;border-radius:3px;font-size:18.5px;color:#4a5a6e;text-align:center;line-height:34px">Export</div>
<div class="a" style="left:1803px;top:159px;width:101px;height:40px;border:1px solid #d9dde2;border-radius:3px;font-size:18.5px;color:#4a5a6e;text-align:center;line-height:34px">Send To</div>

<div class="a" style="left:0;top:210px;width:1575px;height:820px;background:#f8f8f8;overflow:hidden">
<svg class="a" style="left:0;top:0" width="1575" height="820" viewBox="0 210 1575 820">
<defs><clipPath id="gc"><polygon points="800.0,531.4 1777.2,1088.0 83.2,1409.4 -894.0,852.8"/></clipPath>
<filter id="blur6" x="-20%" y="-20%" width="140%" height="140%"><feGaussianBlur stdDeviation="4.5"/></filter>
<filter id="blur3" x="-20%" y="-20%" width="140%" height="140%"><feGaussianBlur stdDeviation="5"/></filter></defs>
<g clip-path="url(#gc)">
<polygon points="800.0,531.4 1777.2,1088.0 83.2,1409.4 -894.0,852.8" fill="#e8f3f7"/>
<path d="M804.9,534.2L-889.1,855.6M791.5,533.0L1768.7,1089.6M809.8,537.0L-884.2,858.4M783.1,534.6L1760.3,1091.2M814.7,539.7L-879.3,861.1M774.6,536.2L1751.8,1092.8M819.5,542.5L-874.5,863.9M766.1,537.8L1743.3,1094.4M824.4,545.3L-869.6,866.7M757.6,539.4L1734.9,1096.0M829.3,548.1L-864.7,869.5M749.2,541.0L1726.4,1097.6M834.2,550.9L-859.8,872.3M740.7,542.6L1717.9,1099.2M839.1,553.7L-854.9,875.1M732.2,544.3L1709.4,1100.9M844.0,556.4L-850.0,877.8M723.8,545.9L1701.0,1102.5M853.7,562.0L-840.3,883.4M706.8,549.1L1684.0,1105.7M858.6,564.8L-835.4,886.2M698.4,550.7L1675.6,1107.3M863.5,567.6L-830.5,889.0M689.9,552.3L1667.1,1108.9M868.4,570.4L-825.6,891.8M681.4,553.9L1658.6,1110.5M873.3,573.1L-820.7,894.5M673.0,555.5L1650.2,1112.1M878.2,575.9L-815.8,897.3M664.5,557.1L1641.7,1113.7M883.1,578.7L-810.9,900.1M656.0,558.7L1633.2,1115.3M887.9,581.5L-806.1,902.9M647.5,560.3L1624.7,1116.9M892.8,584.3L-801.2,905.7M639.1,561.9L1616.3,1118.5M902.6,589.8L-791.4,911.2M622.1,565.1L1599.3,1121.7M907.5,592.6L-786.5,914.0M613.7,566.8L1590.9,1123.4M912.4,595.4L-781.6,916.8M605.2,568.4L1582.4,1125.0M917.3,598.2L-776.7,919.6M596.7,570.0L1573.9,1126.6M922.1,601.0L-771.9,922.4M588.2,571.6L1565.5,1128.2M927.0,603.8L-767.0,925.2M579.8,573.2L1557.0,1129.8M931.9,606.5L-762.1,927.9M571.3,574.8L1548.5,1131.4M936.8,609.3L-757.2,930.7M562.8,576.4L1540.0,1133.0M941.7,612.1L-752.3,933.5M554.4,578.0L1531.6,1134.6M951.5,617.7L-742.5,939.1M537.4,581.2L1514.6,1137.8M956.4,620.5L-737.6,941.9M529.0,582.8L1506.2,1139.4M961.2,623.2L-732.8,944.6M520.5,584.4L1497.7,1141.0M966.1,626.0L-727.9,947.4M512.0,586.0L1489.2,1142.6M971.0,628.8L-723.0,950.2M503.6,587.6L1480.8,1144.2M975.9,631.6L-718.1,953.0M495.1,589.3L1472.3,1145.9M980.8,634.4L-713.2,955.8M486.6,590.9L1463.8,1147.5M985.7,637.2L-708.3,958.6M478.1,592.5L1455.3,1149.1M990.6,639.9L-703.4,961.3M469.7,594.1L1446.9,1150.7M1000.3,645.5L-693.7,966.9M452.7,597.3L1429.9,1153.9M1005.2,648.3L-688.8,969.7M444.3,598.9L1421.5,1155.5M1010.1,651.1L-683.9,972.5M435.8,600.5L1413.0,1157.1M1015.0,653.9L-679.0,975.3M427.3,602.1L1404.5,1158.7M1019.9,656.6L-674.1,978.0M418.8,603.7L1396.0,1160.3M1024.8,659.4L-669.2,980.8M410.4,605.3L1387.6,1161.9M1029.6,662.2L-664.4,983.6M401.9,606.9L1379.1,1163.5M1034.5,665.0L-659.5,986.4M393.4,608.5L1370.6,1165.1M1039.4,667.8L-654.6,989.2M385.0,610.1L1362.2,1166.7M1049.2,673.3L-644.8,994.7M368.0,613.4L1345.2,1170.0M1054.1,676.1L-639.9,997.5M359.6,615.0L1336.8,1171.6M1059.0,678.9L-635.0,1000.3M351.1,616.6L1328.3,1173.2M1063.8,681.7L-630.2,1003.1M342.6,618.2L1319.8,1174.8M1068.7,684.5L-625.3,1005.9M334.1,619.8L1311.3,1176.4M1073.6,687.2L-620.4,1008.6M325.7,621.4L1302.9,1178.0M1078.5,690.0L-615.5,1011.4M317.2,623.0L1294.4,1179.6M1083.4,692.8L-610.6,1014.2M308.7,624.6L1285.9,1181.2M1088.3,695.6L-605.7,1017.0M300.3,626.2L1277.5,1182.8M1098.0,701.2L-596.0,1022.6M283.3,629.4L1260.5,1186.0M1102.9,703.9L-591.1,1025.3M274.9,631.0L1252.1,1187.6M1107.8,706.7L-586.2,1028.1M266.4,632.6L1243.6,1189.2M1112.7,709.5L-581.3,1030.9M257.9,634.2L1235.1,1190.8M1117.6,712.3L-576.4,1033.7M249.4,635.9L1226.7,1192.5M1122.5,715.1L-571.5,1036.5M241.0,637.5L1218.2,1194.1M1127.4,717.9L-566.6,1039.3M232.5,639.1L1209.7,1195.7M1132.2,720.6L-561.8,1042.0M224.0,640.7L1201.2,1197.3M1137.1,723.4L-556.9,1044.8M215.6,642.3L1192.8,1198.9M1146.9,729.0L-547.1,1050.4M198.6,645.5L1175.8,1202.1M1151.8,731.8L-542.2,1053.2M190.2,647.1L1167.4,1203.7M1156.7,734.6L-537.3,1056.0M181.7,648.7L1158.9,1205.3M1161.6,737.3L-532.4,1058.7M173.2,650.3L1150.4,1206.9M1166.5,740.1L-527.5,1061.5M164.8,651.9L1142.0,1208.5M1171.3,742.9L-522.7,1064.3M156.3,653.5L1133.5,1210.1M1176.2,745.7L-517.8,1067.1M147.8,655.1L1125.0,1211.7M1181.1,748.5L-512.9,1069.9M139.3,656.7L1116.5,1213.3M1186.0,751.3L-508.0,1072.7M130.9,658.4L1108.1,1215.0M1195.8,756.8L-498.2,1078.2M113.9,661.6L1091.1,1218.2M1200.7,759.6L-493.3,1081.0M105.5,663.2L1082.7,1219.8M1205.5,762.4L-488.5,1083.8M97.0,664.8L1074.2,1221.4M1210.4,765.2L-483.6,1086.6M88.5,666.4L1065.7,1223.0M1215.3,768.0L-478.7,1089.4M80.0,668.0L1057.2,1224.6M1220.2,770.7L-473.8,1092.1M71.6,669.6L1048.8,1226.2M1225.1,773.5L-468.9,1094.9M63.1,671.2L1040.3,1227.8M1230.0,776.3L-464.0,1097.7M54.6,672.8L1031.8,1229.4M1234.9,779.1L-459.1,1100.5M46.2,674.4L1023.4,1231.0M1244.6,784.7L-449.4,1106.1M29.2,677.6L1006.4,1234.2M1249.5,787.4L-444.5,1108.8M20.8,679.2L998.0,1235.8M1254.4,790.2L-439.6,1111.6M12.3,680.9L989.5,1237.5M1259.3,793.0L-434.7,1114.4M3.8,682.5L981.0,1239.1M1264.2,795.8L-429.8,1117.2M-4.6,684.1L972.6,1240.7M1269.1,798.6L-424.9,1120.0M-13.1,685.7L964.1,1242.3M1273.9,801.4L-420.1,1122.8M-21.6,687.3L955.6,1243.9M1278.8,804.1L-415.2,1125.5M-30.1,688.9L947.1,1245.5M1283.7,806.9L-410.3,1128.3M-38.5,690.5L938.7,1247.1M1293.5,812.5L-400.5,1133.9M-55.5,693.7L921.7,1250.3M1298.4,815.3L-395.6,1136.7M-63.9,695.3L913.3,1251.9M1303.3,818.0L-390.7,1139.4M-72.4,696.9L904.8,1253.5M1308.1,820.8L-385.9,1142.2M-80.9,698.5L896.3,1255.1M1313.0,823.6L-381.0,1145.0M-89.4,700.1L887.9,1256.7M1317.9,826.4L-376.1,1147.8M-97.8,701.7L879.4,1258.3M1322.8,829.2L-371.2,1150.6M-106.3,703.3L870.9,1259.9M1327.7,832.0L-366.3,1153.4M-114.8,705.0L862.4,1261.6M1332.6,834.7L-361.4,1156.1M-123.2,706.6L854.0,1263.2M1342.3,840.3L-351.7,1161.7M-140.2,709.8L837.0,1266.4M1347.2,843.1L-346.8,1164.5M-148.6,711.4L828.6,1268.0M1352.1,845.9L-341.9,1167.3M-157.1,713.0L820.1,1269.6M1357.0,848.7L-337.0,1170.1M-165.6,714.6L811.6,1271.2M1361.9,851.4L-332.1,1172.8M-174.1,716.2L803.1,1272.8M1366.8,854.2L-327.2,1175.6M-182.5,717.8L794.7,1274.4M1371.7,857.0L-322.3,1178.4M-191.0,719.4L786.2,1276.0M1376.5,859.8L-317.5,1181.2M-199.5,721.0L777.7,1277.6M1381.4,862.6L-312.6,1184.0M-207.9,722.6L769.3,1279.2M1391.2,868.1L-302.8,1189.5M-224.9,725.8L752.3,1282.4M1396.1,870.9L-297.9,1192.3M-233.3,727.5L743.9,1284.1M1401.0,873.7L-293.0,1195.1M-241.8,729.1L735.4,1285.7M1405.9,876.5L-288.1,1197.9M-250.3,730.7L726.9,1287.3M1410.8,879.3L-283.2,1200.7M-258.8,732.3L718.5,1288.9M1415.6,882.1L-278.4,1203.5M-267.2,733.9L710.0,1290.5M1420.5,884.8L-273.5,1206.2M-275.7,735.5L701.5,1292.1M1425.4,887.6L-268.6,1209.0M-284.2,737.1L693.0,1293.7M1430.3,890.4L-263.7,1211.8M-292.6,738.7L684.6,1295.3M1440.1,896.0L-253.9,1217.4M-309.6,741.9L667.6,1298.5M1445.0,898.8L-249.0,1220.2M-318.0,743.5L659.2,1300.1M1449.8,901.5L-244.2,1222.9M-326.5,745.1L650.7,1301.7M1454.7,904.3L-239.3,1225.7M-335.0,746.7L642.2,1303.3M1459.6,907.1L-234.4,1228.5M-343.5,748.3L633.8,1304.9M1464.5,909.9L-229.5,1231.3M-351.9,750.0L625.3,1306.6M1469.4,912.7L-224.6,1234.1M-360.4,751.6L616.8,1308.2M1474.3,915.5L-219.7,1236.9M-368.9,753.2L608.3,1309.8M1479.2,918.2L-214.8,1239.6M-377.3,754.8L599.9,1311.4M1488.9,923.8L-205.1,1245.2M-394.3,758.0L582.9,1314.6M1493.8,926.6L-200.2,1248.0M-402.7,759.6L574.5,1316.2M1498.7,929.4L-195.3,1250.8M-411.2,761.2L566.0,1317.8M1503.6,932.2L-190.4,1253.6M-419.7,762.8L557.5,1319.4M1508.5,934.9L-185.5,1256.3M-428.2,764.4L549.0,1321.0M1513.4,937.7L-180.6,1259.1M-436.6,766.0L540.6,1322.6M1518.2,940.5L-175.8,1261.9M-445.1,767.6L532.1,1324.2M1523.1,943.3L-170.9,1264.7M-453.6,769.2L523.6,1325.8M1528.0,946.1L-166.0,1267.5M-462.0,770.8L515.2,1327.4M1537.8,951.6L-156.2,1273.0M-479.0,774.1L498.2,1330.7M1542.7,954.4L-151.3,1275.8M-487.4,775.7L489.8,1332.3M1547.6,957.2L-146.4,1278.6M-495.9,777.3L481.3,1333.9M1552.4,960.0L-141.6,1281.4M-504.4,778.9L472.8,1335.5M1557.3,962.8L-136.7,1284.2M-512.9,780.5L464.3,1337.1M1562.2,965.5L-131.8,1286.9M-521.3,782.1L455.9,1338.7M1567.1,968.3L-126.9,1289.7M-529.8,783.7L447.4,1340.3M1572.0,971.1L-122.0,1292.5M-538.3,785.3L438.9,1341.9M1576.9,973.9L-117.1,1295.3M-546.7,786.9L430.5,1343.5M1586.6,979.5L-107.4,1300.9M-563.7,790.1L413.5,1346.7M1591.5,982.2L-102.5,1303.6M-572.1,791.7L405.1,1348.3M1596.4,985.0L-97.6,1306.4M-580.6,793.3L396.6,1349.9M1601.3,987.8L-92.7,1309.2M-589.1,794.9L388.1,1351.5M1606.2,990.6L-87.8,1312.0M-597.5,796.6L379.7,1353.2M1611.1,993.4L-82.9,1314.8M-606.0,798.2L371.2,1354.8M1616.0,996.2L-78.0,1317.6M-614.5,799.8L362.7,1356.4M1620.8,998.9L-73.2,1320.3M-623.0,801.4L354.2,1358.0M1625.7,1001.7L-68.3,1323.1M-631.4,803.0L345.8,1359.6M1635.5,1007.3L-58.5,1328.7M-648.4,806.2L328.8,1362.8M1640.4,1010.1L-53.6,1331.5M-656.8,807.8L320.4,1364.4M1645.3,1012.9L-48.7,1334.3M-665.3,809.4L311.9,1366.0M1650.2,1015.6L-43.8,1337.0M-673.8,811.0L303.4,1367.6M1655.0,1018.4L-39.0,1339.8M-682.2,812.6L295.0,1369.2M1659.9,1021.2L-34.1,1342.6M-690.7,814.2L286.5,1370.8M1664.8,1024.0L-29.2,1345.4M-699.2,815.8L278.0,1372.4M1669.7,1026.8L-24.3,1348.2M-707.7,817.4L269.5,1374.0M1674.6,1029.6L-19.4,1351.0M-716.1,819.1L261.1,1375.7M1684.4,1035.1L-9.6,1356.5M-733.1,822.3L244.1,1378.9M1689.3,1037.9L-4.7,1359.3M-741.5,823.9L235.7,1380.5M1694.1,1040.7L0.1,1362.1M-750.0,825.5L227.2,1382.1M1699.0,1043.5L5.0,1364.9M-758.5,827.1L218.7,1383.7M1703.9,1046.3L9.9,1367.7M-767.0,828.7L210.2,1385.3M1708.8,1049.0L14.8,1370.4M-775.4,830.3L201.8,1386.9M1713.7,1051.8L19.7,1373.2M-783.9,831.9L193.3,1388.5M1718.6,1054.6L24.6,1376.0M-792.4,833.5L184.8,1390.1M1723.5,1057.4L29.5,1378.8M-800.8,835.1L176.4,1391.7M1733.2,1063.0L39.2,1384.4M-817.8,838.3L159.4,1394.9M1738.1,1065.7L44.1,1387.1M-826.2,839.9L151.0,1396.5M1743.0,1068.5L49.0,1389.9M-834.7,841.6L142.5,1398.2M1747.9,1071.3L53.9,1392.7M-843.2,843.2L134.0,1399.8M1752.8,1074.1L58.8,1395.5M-851.7,844.8L125.5,1401.4M1757.7,1076.9L63.7,1398.3M-860.1,846.4L117.1,1403.0M1762.5,1079.7L68.5,1401.1M-868.6,848.0L108.6,1404.6M1767.4,1082.4L73.4,1403.8M-877.1,849.6L100.1,1406.2M1772.3,1085.2L78.3,1406.6M-885.5,851.2L91.7,1407.8" stroke="#80cbe8" stroke-width="1" fill="none" opacity="0.62"/>
<path d="M800.0,531.4L-894.0,852.8M800.0,531.4L1777.2,1088.0M848.9,559.2L-845.1,880.6M715.3,547.5L1692.5,1104.1M897.7,587.1L-796.3,908.5M630.6,563.5L1607.8,1120.1M946.6,614.9L-747.4,936.3M545.9,579.6L1523.1,1136.2M995.4,642.7L-698.6,964.1M461.2,595.7L1438.4,1152.3M1044.3,670.5L-649.7,991.9M376.5,611.8L1353.7,1168.3M1093.2,698.4L-600.8,1019.8M291.8,627.8L1269.0,1184.4M1142.0,726.2L-552.0,1047.6M207.1,643.9L1184.3,1200.5M1190.9,754.0L-503.1,1075.4M122.4,660.0L1099.6,1216.6M1239.7,781.9L-454.3,1103.3M37.7,676.0L1014.9,1232.6M1288.6,809.7L-405.4,1131.1M-47.0,692.1L930.2,1248.7M1337.5,837.5L-356.5,1158.9M-131.7,708.2L845.5,1264.8M1386.3,865.4L-307.7,1186.8M-216.4,724.2L760.8,1280.8M1435.2,893.2L-258.8,1214.6M-301.1,740.3L676.1,1296.9M1484.0,921.0L-210.0,1242.4M-385.8,756.4L591.4,1313.0M1532.9,948.8L-161.1,1270.2M-470.5,772.5L506.7,1329.0M1581.8,976.7L-112.2,1298.1M-555.2,788.5L422.0,1345.1M1630.6,1004.5L-63.4,1325.9M-639.9,804.6L337.3,1361.2M1679.5,1032.3L-14.5,1353.7M-724.6,820.7L252.6,1377.3M1728.3,1060.2L34.3,1381.6M-809.3,836.7L167.9,1393.3M1777.2,1088.0L83.2,1409.4M-894.0,852.8L83.2,1409.4" stroke="#3597c4" stroke-width="1.1" fill="none" opacity="0.68"/>
<path d="M800.0,531.4L1777.2,1088.0" stroke="#5cb8e0" stroke-width="30" fill="none" opacity="0.3" filter="url(#blur3)"/>
<path d="M-894.0,852.8L800.0,531.4" stroke="#5cb8e0" stroke-width="24" fill="none" opacity="0.16" filter="url(#blur3)"/>
</g>
<!-- shadow -->
<polygon points="384,862 501,837 520,845 740,838 800,870 732,924 748,940 552,974 500,946" fill="#2a4560" opacity="0.42" filter="url(#blur6)"/>
<polygon points="740.5,837.9 844.8,897.5 717.5,921.9 700,880" fill="#3d5a70" opacity="0.33"/>
<path d="M740.5,837.9L844.8,897.5L717.5,921.9" fill="none" stroke="#27c3ef" stroke-width="1.7"/>
<path d="M535,442L526.25,390L671.1,398.8L807.6,476.6L847.4,719.3V805.2L740.5,826.5" fill="none" stroke="#1fcaf4" stroke-width="6" stroke-linejoin="round"/>
<!-- column left face -->
<polygon points="500.5,543.75 517,553.75 574.8,899.4 545.2,957.8 500.1,932.6" fill="#b31822"/>
<!-- column front -->
<polygon points="517,553.75 687.5,521.25 744.6,867.4 574.8,899.4" fill="#d21a28"/>
<!-- column bottom -->
<polygon points="574.8,899.4 744.6,867.4 715.6,926.7 545.2,957.8" fill="#9c141f"/>
<!-- slab -->
<polygon points="664.3,469.6 807.6,477 847.4,719.3 847.4,805.2 738,827.4 687.5,521.25 670.1,511.6" fill="#d03340"/>
<polygon points="723.6,740 847.4,719.5 847.4,805.2 738,827.4" fill="#c02c38"/>
<polygon points="526.25,390 671.1,398.8 807.6,476.6 664.3,469.6" fill="#d63543"/>
<polygon points="526.25,390 664.3,469.6 670.1,511.6 543.75,440.75 535,442" fill="#b52b38"/>
<!-- box -->
<polygon points="374.5,472 535,442 543.75,440.75 671.25,512 501.25,543.75" fill="#dc1c2b"/>
<polygon points="501.25,543.75 671.25,512 687.5,521.25 517,553.75" fill="#da1c2b"/>
<polygon points="374.5,472 501.25,543.75 501.25,618.75 374.5,548" fill="#b41822"/>
<polygon points="501.25,543.75 517,553.75 517,628.75 501.25,618.75" fill="#b41822"/>
<!-- edges -->
<g fill="none" stroke="#3e5272" stroke-width="1.6" stroke-linejoin="round">
<path d="M374.5,472L535,442M374.5,472L501.25,543.75M374.5,472V548L517,628.75M501.25,543.75V618.75M501.25,543.75L671.25,512M517,553.75L687.5,521.25M501.25,543.75L517,553.75V628.75M543.75,440.75L671.25,512"/>
<path d="M500.1,625V932.6L545.2,957.8L715.6,926.7L744.6,867.4L687.5,521.25M517,553.75L574.8,899.4L744.6,867.4M574.8,899.4L545.2,957.8"/>
<path d="M526.25,390L664.3,469.6L807.6,477M664.3,469.6L670.1,511.6L687.5,521.25"/>
</g>
<path d="M535,442L526.25,390L671.1,398.8L807.6,476.6L847.4,719.3V805.2L740.5,826.5" fill="none" stroke="#3a4a68" stroke-width="1.6" stroke-linejoin="round"/>
<!-- dashed box -->
<g fill="none" stroke="#4a2228" stroke-width="1.4" stroke-dasharray="5,4">
<path d="M528.9,727.6L663.7,701.5L845,805.2L709.6,831Z"/>
<path d="M687.3,440V766"/></g>
<g fill="#333"><rect x="592" y="710.3" width="9" height="9"/><rect x="614.8" y="774.9" width="9" height="9"/><rect x="750.2" y="749.1" width="9" height="9"/><rect x="773.3" y="813.1" width="9" height="9"/></g>
<g fill="#e2e2e2" stroke="#333" stroke-width="2.4">
<rect x="680.8" y="424.8" width="13" height="13"/><rect x="522.4" y="721.1" width="13" height="13"/><rect x="657.2" y="695" width="13" height="13"/><rect x="703.1" y="824.5" width="13" height="13"/><rect x="838.5" y="798.7" width="13" height="13"/></g>
<path d="M686.8,367.7Q685,369 680.5,383Q680,385.5 686.8,385.5Q693.6,385.5 693,383Q688.5,369 686.8,367.7Z" fill="#333"/>
<g fill="none" stroke="#8a8a8a" stroke-width="1.6"><path d="M585,359Q597,336 610,353"/><path d="M748,391Q753,377 761,398"/></g><path d="M780,829Q792,834 805,824" fill="none" stroke="#333" stroke-width="1.4"/>
<g fill="#8a8a8a"><path d="M583,363L582,353L589,357Z"/><path d="M611,357L612,347L606,352Z"/><path d="M747,394L746,385L752,388Z"/><path d="M762,401L763,393L757,395Z"/></g>
<g fill="#333"><path d="M778,827l4-3v5z"/><path d="M806,823l-5-2 1 5z"/></g>

</svg></div>
<!-- view cube -->
<svg class="a" style="left:26px;top:240px" width="112" height="112" viewBox="26 240 112 112">
<defs><linearGradient id="cubeR" x1="0" y1="0" x2="1" y2="1"><stop offset="0" stop-color="#fbfbfb"/><stop offset="1" stop-color="#e9e9e9"/></linearGradient></defs>
<polygon points="40,320 65,343 126,327 128,332 66,349 38,324" fill="#c9c9c9" opacity="0.8"/>
<polygon points="34.2,252.9 89.6,248.3 128.3,259.2 63.3,266.3" fill="#f7f7f7" stroke="#bdbdbd" stroke-width="1"/>
<polygon points="34.2,252.9 63.3,266.3 64.6,340 39.6,319.2" fill="#f3f3f3" stroke="#bdbdbd" stroke-width="1"/>
<polygon points="63.3,266.3 128.3,259.2 125,325.8 64.6,340" fill="url(#cubeR)" stroke="#bdbdbd" stroke-width="1"/>
<text x="0" y="0" font-family="Liberation Sans" font-weight="bold" font-size="16" fill="#a2a7ae" transform="matrix(0.8,-0.2,0.02,1.15,77,312)">RIGHT</text>
<text x="0" y="0" font-family="Liberation Sans" font-weight="bold" font-size="11" fill="#9da2a9" transform="matrix(0.5,0.48,-0.03,1.05,39,290)">FRONT</text>
<path d="M73,255l5-1M80,257l4,-1" stroke="#aaa" stroke-width="1"/>
</svg>

<!-- nav buttons -->
<svg class="a" style="left:21px;top:369px" width="46" height="255" viewBox="21 369 46 255">
<g fill="#fafafa" stroke="#a4a8ad" stroke-width="1.1"><circle cx="43.8" cy="391.3" r="20.6"/><circle cx="43.8" cy="443.8" r="20.6"/><circle cx="43.8" cy="496.5" r="20.6"/><circle cx="43.8" cy="548.5" r="20.6"/><circle cx="44" cy="601" r="20.6"/></g>
<g fill="none" stroke="#b9b9b9" stroke-width="1.6">
<path d="M34.4,391.8L43.3,382L52.7,391.8H49.6V400.2H45.6V393.6H41.6V400.2H37.6V391.8Z" stroke-linejoin="miter"/>
<path d="M34.9,440.2V435.3H39.8M47.8,435.3H52.7V440.2M52.7,447.8V452.7H47.8M39.8,452.7H34.9V447.8"/>
<path d="M36.5,496.5H51M43.8,489.2V503.8" stroke-width="2.6"/>
<path d="M36.3,548.5H51.3" stroke-width="2.4"/>
<path d="M33.3,610H53.9" stroke-width="1.8"/>
<path d="M35.8,604.5V594.4H47.5L49.4,599.3H38.5V609.6M35.8,604.5L38.5,609.6M49.4,599.3V609.6M35.8,594.4L38.5,599.3" stroke-width="1.4"/>
</g></svg>
<!-- edit grid / snap grid -->
<div class="a" style="left:1451px;top:952px;width:111px;height:25px;background:rgba(255,255,255,0.55);border:1px solid rgba(225,232,238,0.9);border-radius:3px;font-size:14.5px;color:#6b7886;text-align:center;line-height:23px">Edit Grid</div>
<div class="a" style="left:1396px;top:995px;font-size:15px;color:#556371;white-space:nowrap">Snap Grid</div>
<div class="a" style="left:1474px;top:992px;width:88px;height:26px;background:rgba(255,255,255,0.6);border:1px solid rgba(225,232,238,0.9);border-radius:2px;font-size:15px;color:#6b7886;line-height:24px;padding-left:10px;white-space:nowrap">0.5 mm</div>
<svg class="a" style="left:1541px;top:1000px" width="9" height="6"><path d="M0.5,5.5L4.5,0.5L8.5,5.5Z" fill="#333"/></svg>


<!-- inspector -->
<div class="a" style="left:1240px;top:225px;width:320px;height:219px;background:#fafafa;border-radius:3px;box-shadow:0 1px 3px rgba(0,0,0,0.18)"></div>
<div class="a" style="left:1240px;top:225px;width:320px;height:51px;background:#fff;border-radius:3px 3px 0 0;border-bottom:1px solid #dfe3e8"></div>
<div class="a" style="left:1290px;top:225px;width:1px;height:50px;background:#dfe3e8"></div>
<svg class="a" style="left:1255px;top:241px" width="20" height="13"><path d="M10,1.2L18.6,10.3Q19.3,12 17.6,12H2.4Q0.7,12 1.4,10.3Z" fill="#34495e"/></svg>
<div class="a" style="left:1304px;top:238px;font-size:19px;font-weight:bold;color:#34495e;white-space:nowrap">Shape</div>
<svg class="a" style="left:1474px;top:234px" width="20" height="26"><path d="M10.5,12V7Q10.5,2.5 14,2.5Q17.5,2.5 17.5,7" fill="none" stroke="#5a6e82" stroke-width="2.4"/><rect x="2" y="11.5" width="16" height="13" rx="2" fill="#5a6e82"/></svg>
<svg class="a" style="left:1516px;top:233px" width="21" height="27"><path d="M6.5,18.5Q6.5,16 4.5,13.5Q2,10.5 2,8.5A8.5,8.5 0 0 1 19,8.5Q19,10.5 16.5,13.5Q14.5,16 14.5,18.5Z" fill="#c9d1db" stroke="#5a6e82" stroke-width="1.8"/><path d="M7,21H14M8,24H13" stroke="#5a6e82" stroke-width="1.8"/></svg>
<svg class="a" style="left:1305px;top:303px" width="70" height="70"><circle cx="35" cy="35" r="31" fill="#fff" stroke="#5b95d9" stroke-width="2"/><circle cx="35" cy="35" r="25.5" fill="#e61c2c"/></svg>
<div class="a" style="left:1300px;top:378px;width:80px;text-align:center;font-size:15px;color:#555f6a">Solid</div>
<svg class="a" style="left:1425px;top:303px" width="70" height="70"><defs><clipPath id="hc"><circle cx="35" cy="35" r="25.5"/></clipPath></defs><circle cx="35" cy="35" r="31.5" fill="#fff"/><g clip-path="url(#hc)"><rect width="70" height="70" fill="#c6c6c6"/><g stroke="#a6a6a6" stroke-width="5.5"><path d="M-10,50L50,-10M0,60L60,0M10,70L70,10M-20,40L40,-20M20,80L80,20"/></g></g></svg>
<div class="a" style="left:1420px;top:378px;width:80px;text-align:center;font-size:15px;color:#555f6a">Hole</div>
<!-- right panel -->
<div class="a" style="left:1575px;top:210px;width:345px;height:820px;background:#f0f0f2"></div>
<svg class="a" style="left:1609px;top:225px" width="46" height="48" viewBox="0 0 46 48">
<path d="M7.4,4.1L8.8,43.3M12.6,3.8L13.7,43.7M17.7,3.5L18.5,44.0M22.9,3.2L23.4,44.4M28.0,3.0L28.2,44.7M33.1,2.7L33.1,45.0M38.3,2.4L37.9,45.4M2.5,9.2L43.3,7.6M2.7,14.1L43.2,13.0M2.9,18.9L43.2,18.5M3.1,23.7L43.1,23.9M3.4,28.5L43.0,29.4M3.6,33.4L42.9,34.8M3.8,38.2L42.9,40.2" stroke="#1a8dc1" stroke-width="1" fill="none" opacity="0.85"/>
<path d="M22.9,3.2L23.4,44.4" stroke="#1a8dc1" stroke-width="1.6"/>
<path d="M2.3,4.4L43.4,2.1L42.8,45.7L4,43Z" fill="none" stroke="#1a8dc1" stroke-width="2.2" stroke-linejoin="round"/></svg>
<div class="a lbl" style="left:1590px;top:281px;width:85px;font-size:15px">Workplane</div>
<svg class="a" style="left:1724px;top:228px" width="48" height="46" viewBox="0 0 48 46">
<path d="M3,2L13,1.5L14.5,28.5L45,31.5L45.5,43L6,41Z" fill="none" stroke="#1a8dc1" stroke-width="2.1" stroke-linejoin="round"/>
<g stroke="#1a8dc1" stroke-width="1.4"><path d="M7,8H12M7.5,14H12.5M8,20H12.5M8.5,26H13M18,33V37M24,33.5V38M30,34V38M36,34.5V38.5"/></g></svg>
<div class="a lbl" style="left:1708px;top:281px;width:80px;font-size:15px">Ruler</div>
<svg class="a" style="left:1843px;top:226px" width="38" height="48" viewBox="0 0 38 48">
<path d="M7,2.5H31Q35.5,2.5 35.5,7V33Q35.5,37.5 31,37.5H25L19,45.5L13,37.5H7Q2.5,37.5 2.5,33V7Q2.5,2.5 7,2.5Z" fill="none" stroke="#1a8dc1" stroke-width="2.4" stroke-linejoin="round"/>
<g stroke="#1a8dc1" stroke-width="1.6"><path d="M10,12H28M10,17H28M10,22H28M10,27H24"/></g></svg>
<div class="a lbl" style="left:1822px;top:281px;width:80px;font-size:15px">Notes</div>
<div class="a" style="left:1575px;top:309px;width:345px;height:1px;background:#dcdfe4"></div>
<div class="a" style="left:1582px;top:318px;width:331px;height:76px;background:#f4f4f6;border:1px solid #e3e5e9;border-radius:3px;box-shadow:0 1px 2px rgba(0,0,0,0.08)"></div>
<div class="a" style="left:1595px;top:329px;font-size:14px;color:#5b6672;white-space:nowrap">Tinkercad</div>
<div class="a" style="left:1595px;top:357px;font-size:19px;color:#4a5868;white-space:nowrap">Basic Shapes</div>
<svg class="a" style="left:1878px;top:353px" width="13" height="8"><path d="M0,0.5H13L6.5,7.5Z" fill="#111"/></svg>
<div class="a" style="left:1581px;top:408px;width:332px;height:1px;background:#dcdfe4"></div>
<div class="a" style="left:1904px;top:409px;width:10px;height:168px;background:#c1c1c1;border-radius:5px"></div>
<!-- shape thumbnails -->
<svg class="a" style="left:1600px;top:420px" width="300" height="600" viewBox="1600 420 300 600">
<defs>
<pattern id="stripes" patternUnits="userSpaceOnUse" width="10" height="10" patternTransform="rotate(-45)"><rect width="10" height="10" fill="#c0c7d1"/><rect width="5" height="10" fill="#a2aab5"/></pattern>
<pattern id="stripes2" patternUnits="userSpaceOnUse" width="10" height="10" patternTransform="rotate(-45)"><rect width="10" height="10" fill="#d6dbe4"/><rect width="5" height="10" fill="#b4bbc6"/></pattern>
<linearGradient id="cylOr" x1="0" x2="1"><stop offset="0" stop-color="#c25a0e"/><stop offset="0.6" stop-color="#d9761c"/><stop offset="1" stop-color="#e07a18"/></linearGradient>
<linearGradient id="cylG" x1="0" x2="1"><stop offset="0" stop-color="#000" stop-opacity="0.15"/><stop offset="0.7" stop-color="#fff" stop-opacity="0.15"/><stop offset="1" stop-color="#000" stop-opacity="0.05"/></linearGradient>
<radialGradient id="sph" cx="0.62" cy="0.35" r="0.7"><stop offset="0" stop-color="#10aee8"/><stop offset="0.65" stop-color="#0a98d4"/><stop offset="1" stop-color="#0878ae"/></radialGradient>
<filter id="soft" x="-30%" y="-30%" width="160%" height="160%"><feGaussianBlur stdDeviation="5"/></filter>
</defs>
<!-- hole box -->
<polygon points="1649.3,440.6 1712.9,450.6 1694,483.3 1621.8,471.2" fill="url(#stripes2)"/>
<polygon points="1621.8,471.2 1694,483.3 1692.8,544.6 1626.1,530.3" fill="url(#stripes)"/>
<polygon points="1712.9,450.6 1694,483.3 1692.8,544.6 1710.3,504.2" fill="url(#stripes2)"/>
<g fill="none" stroke="#5f646b" stroke-width="1.6" stroke-linejoin="round"><polygon points="1649.3,440.6 1712.9,450.6 1710.3,504.2 1692.8,544.6 1626.1,530.3 1621.8,471.2"/><path d="M1621.8,471.2L1694,483.3L1712.9,450.6M1694,483.3L1692.8,544.6" stroke-width="0.6"/></g>
<!-- hole cylinder -->
<path d="M1789.4,461.3V523A36.1,17.2 0 0 0 1861.6,523V461.3Z" fill="url(#stripes)"/>
<path d="M1789.4,461.3V523A36.1,17.2 0 0 0 1861.6,523V461.3Z" fill="url(#cylG)"/>
<ellipse cx="1825.5" cy="461.3" rx="36.1" ry="17.2" fill="url(#stripes2)"/>
<g fill="none" stroke="#5f646b" stroke-width="1.6"><path d="M1789.4,461.3V523A36.1,17.2 0 0 0 1861.6,523V461.3"/><ellipse cx="1825.5" cy="461.3" rx="36.1" ry="17.2"/></g>
<!-- red box -->
<polygon points="1649.3,631 1712.9,641 1694,673.7 1621.8,661.6" fill="#c91a29"/>
<polygon points="1621.8,661.6 1694,673.7 1692.8,735 1626.1,720.7" fill="#a9141e"/>
<polygon points="1712.9,641 1694,673.7 1692.8,735 1710.3,694.6" fill="#bb1722"/>
<g fill="none" stroke="#6a1a1a" stroke-width="1.2" stroke-linejoin="round"><polygon points="1649.3,631 1712.9,641 1710.3,694.6 1692.8,735 1626.1,720.7 1621.8,661.6"/><path d="M1621.8,661.6L1694,673.7L1712.9,641M1694,673.7L1692.8,735" stroke-width="0.5"/></g>
<!-- orange cylinder -->
<path d="M1789.4,651.7V713.4A36.1,17.2 0 0 0 1861.6,713.4V651.7Z" fill="url(#cylOr)"/>
<ellipse cx="1825.5" cy="651.7" rx="36.1" ry="17.2" fill="#d8761e"/>
<g fill="none" stroke="#7a3c0a" stroke-width="1.2"><path d="M1789.4,651.7V713.4A36.1,17.2 0 0 0 1861.6,713.4V651.7"/><ellipse cx="1825.5" cy="651.7" rx="36.1" ry="17.2"/></g>
<!-- sphere -->
<circle cx="1669" cy="871" r="35" fill="url(#sph)"/>
<!-- scribble -->
<g fill="none" stroke-width="8.5" stroke-linecap="round" stroke-linejoin="round"><path d="M1796,872 C1796,857 1808,854 1809,866 C1809,851 1822,847 1826,858 L1846,884 C1843,868 1841,852 1846,848 C1850,845 1854,850 1853,856" transform="translate(0,34)" stroke="#7fa5c3" /><path d="M1796,872 C1796,857 1808,854 1809,866 C1809,851 1822,847 1826,858 L1846,884 C1843,868 1841,852 1846,848 C1850,845 1854,850 1853,856" transform="translate(0,32)" stroke="#7fa5c3" /><path d="M1796,872 C1796,857 1808,854 1809,866 C1809,851 1822,847 1826,858 L1846,884 C1843,868 1841,852 1846,848 C1850,845 1854,850 1853,856" transform="translate(0,30)" stroke="#7fa5c3" /><path d="M1796,872 C1796,857 1808,854 1809,866 C1809,851 1822,847 1826,858 L1846,884 C1843,868 1841,852 1846,848 C1850,845 1854,850 1853,856" transform="translate(0,28)" stroke="#7fa5c3" /><path d="M1796,872 C1796,857 1808,854 1809,866 C1809,851 1822,847 1826,858 L1846,884 C1843,868 1841,852 1846,848 C1850,845 1854,850 1853,856" transform="translate(0,26)" stroke="#7fa5c3" /><path d="M1796,872 C1796,857 1808,854 1809,866 C1809,851 1822,847 1826,858 L1846,884 C1843,868 1841,852 1846,848 C1850,845 1854,850 1853,856" transform="translate(0,24)" stroke="#7fa5c3" /><path d="M1796,872 C1796,857 1808,854 1809,866 C1809,851 1822,847 1826,858 L1846,884 C1843,868 1841,852 1846,848 C1850,845 1854,850 1853,856" transform="translate(0,22)" stroke="#7fa5c3" /><path d="M1796,872 C1796,857 1808,854 1809,866 C1809,851 1822,847 1826,858 L1846,884 C1843,868 1841,852 1846,848 C1850,845 1854,850 1853,856" transform="translate(0,20)" stroke="#7fa5c3" /><path d="M1796,872 C1796,857 1808,854 1809,866 C1809,851 1822,847 1826,858 L1846,884 C1843,868 1841,852 1846,848 C1850,845 1854,850 1853,856" transform="translate(0,18)" stroke="#7fa5c3" /><path d="M1796,872 C1796,857 1808,854 1809,866 C1809,851 1822,847 1826,858 L1846,884 C1843,868 1841,852 1846,848 C1850,845 1854,850 1853,856" transform="translate(0,16)" stroke="#7fa5c3" /><path d="M1796,872 C1796,857 1808,854 1809,866 C1809,851 1822,847 1826,858 L1846,884 C1843,868 1841,852 1846,848 C1850,845 1854,850 1853,856" transform="translate(0,14)" stroke="#7fa5c3" /><path d="M1796,872 C1796,857 1808,854 1809,866 C1809,851 1822,847 1826,858 L1846,884 C1843,868 1841,852 1846,848 C1850,845 1854,850 1853,856" transform="translate(0,12)" stroke="#7fa5c3" /><path d="M1796,872 C1796,857 1808,854 1809,866 C1809,851 1822,847 1826,858 L1846,884 C1843,868 1841,852 1846,848 C1850,845 1854,850 1853,856" transform="translate(0,10)" stroke="#7fa5c3" /><path d="M1796,872 C1796,857 1808,854 1809,866 C1809,851 1822,847 1826,858 L1846,884 C1843,868 1841,852 1846,848 C1850,845 1854,850 1853,856" transform="translate(0,8)" stroke="#7fa5c3" /><path d="M1796,872 C1796,857 1808,854 1809,866 C1809,851 1822,847 1826,858 L1846,884 C1843,868 1841,852 1846,848 C1850,845 1854,850 1853,856" transform="translate(0,6)" stroke="#7fa5c3" /><path d="M1796,872 C1796,857 1808,854 1809,866 C1809,851 1822,847 1826,858 L1846,884 C1843,868 1841,852 1846,848 C1850,845 1854,850 1853,856" transform="translate(0,4)" stroke="#7fa5c3" /><path d="M1796,872 C1796,857 1808,854 1809,866 C1809,851 1822,847 1826,858 L1846,884 C1843,868 1841,852 1846,848 C1850,845 1854,850 1853,856" transform="translate(0,2)" stroke="#86accb" /><path d="M1796,872 C1796,857 1808,854 1809,866 C1809,851 1822,847 1826,858 L1846,884 C1843,868 1841,852 1846,848 C1850,845 1854,850 1853,856" stroke="#9ec5e3"/></g>
</svg>
<div class="a lbl" style="left:1629px;top:554px;width:80px;font-size:15px">Box</div>
<div class="a lbl" style="left:1785px;top:554px;width:80px;font-size:15px">Cylinder</div>
<div class="a lbl" style="left:1629px;top:744px;width:80px;font-size:15px">Box</div>
<div class="a lbl" style="left:1785px;top:744px;width:80px;font-size:15px">Cylinder</div>
<div class="a lbl" style="left:1629px;top:935px;width:80px;font-size:15px">Sphere</div>
<div class="a lbl" style="left:1785px;top:935px;width:80px;font-size:15px">Scribble</div>

<div class="a" style="left:1563px;top:592px;width:20px;height:59px;background:#f3f4f6;border:1px solid #dde2ea;border-right:none"></div>
<svg class="a" style="left:1566px;top:604px" width="16" height="36"><path d="M4.3,4.5L12.2,18.2L4.3,31.2" fill="none" stroke="#111" stroke-width="2.4" stroke-linecap="round" stroke-linejoin="round"/></svg>

<!-- taskbar -->
<div class="a" style="left:0;top:1030px;width:1920px;height:50px;background:#2d2420"></div>
<div class="a" style="left:0;top:1030px;width:60px;height:50px;background:#211b18"></div>
<svg class="a" style="left:20px;top:1045px" width="21" height="20"><g fill="#fff"><path d="M0,2.8L8.5,1.6V9.5H0z"/><path d="M9.7,1.4L21,0V9.5H9.7z"/><path d="M0,10.6H8.5V18.4L0,17.2z"/><path d="M9.7,10.6H21V20L9.7,18.6z"/></g></svg>
<div class="a" style="left:60px;top:1030px;width:430px;height:50px;background:#f0f0f0;border-top:1px solid #d0d0d0"></div>
<svg class="a" style="left:75px;top:1045px" width="21" height="21"><circle cx="13" cy="8" r="6.5" fill="none" stroke="#222" stroke-width="1.6"/><path d="M8.5,12.5L1,20" stroke="#222" stroke-width="1.8"/></svg>
<div class="a" style="left:110px;top:1044px;font-size:18.5px;color:#2a2a2a;white-space:nowrap">Type here to search</div>
<svg class="a" style="left:510px;top:1044px" width="20" height="20"><circle cx="10" cy="10" r="8.3" fill="none" stroke="#fff" stroke-width="2.2"/></svg>
<svg class="a" style="left:569px;top:1044px" width="22" height="20"><g fill="none" stroke="#fff" stroke-width="1.5"><rect x="3" y="5.5" width="12" height="9"/><path d="M1,2H17M1,18H17M20,2V18"/></g></svg>
<!-- explorer -->
<svg class="a" style="left:630px;top:1042px" width="28" height="24"><path d="M1,3H10L12,5H27V22H1Z" fill="#f5c242"/><path d="M1,8H27V22H1Z" fill="#ffd966"/><rect x="7" y="13" width="14" height="7" fill="#2a8ad8"/><rect x="9" y="15" width="10" height="3" fill="#ffd966"/></svg>
<div class="a" style="left:619px;top:1077px;width:50px;height:3px;background:#76b9ed"></div>
<!-- store -->
<svg class="a" style="left:692px;top:1040px" width="26" height="27"><path d="M8,7V5Q8,1 13,1Q18,1 18,5V7" fill="none" stroke="#eee" stroke-width="1.6"/><rect x="1" y="7" width="24" height="19" fill="#f2f2f2"/><rect x="8" y="11" width="4.5" height="4.5" fill="#f25022"/><rect x="13.5" y="11" width="4.5" height="4.5" fill="#7fba00"/><rect x="8" y="16.5" width="4.5" height="4.5" fill="#00a4ef"/><rect x="13.5" y="16.5" width="4.5" height="4.5" fill="#ffb900"/></svg>
<!-- steam -->
<svg class="a" style="left:752px;top:1040px" width="29" height="29"><circle cx="14.5" cy="14.5" r="14" fill="#1b3a6e"/><circle cx="14.5" cy="14.5" r="13" fill="#133060"/><circle cx="18.5" cy="11" r="5" fill="none" stroke="#fff" stroke-width="2"/><circle cx="9" cy="19" r="3" fill="none" stroke="#fff" stroke-width="1.6"/><path d="M1,15L8,18M11,18L15,14" stroke="#fff" stroke-width="2"/></svg>
<!-- predator -->
<svg class="a" style="left:814px;top:1039px" width="32" height="31"><path d="M2,1L11,5H21L30,1V22L22,30H10L2,22Z" fill="#1e2a30"/><path d="M5,4L12,9L16,20L20,9L27,4L24,20L16,28L8,20Z" fill="#3b6b7a"/><path d="M11,10L16,22L21,10L18,14H14Z" fill="#10181c"/></svg>
<!-- mail -->
<svg class="a" style="left:876px;top:1040px" width="46" height="34"><path d="M1,10L15,1L29,10V27H1Z" fill="#0f6cbd"/><path d="M1,10L15,19L29,10V27H1Z" fill="#2b93e6"/><circle cx="31" cy="24" r="9.5" fill="#2b2320" stroke="#bbb" stroke-width="1"/><text x="31" y="29" font-family="Liberation Sans" font-size="14" fill="#fff" text-anchor="middle">55</text></svg>
<!-- chrome -->
<div class="a" style="left:924px;top:1030px;width:60px;height:50px;background:#4a4340"></div>
<div class="a" style="left:924px;top:1077px;width:60px;height:3px;background:#76b9ed"></div>
<svg class="a" style="left:940px;top:1041px" width="28" height="28" viewBox="0 0 28 28"><circle cx="14" cy="14" r="13.5" fill="#db4437"/><path d="M14,14L2.3,7.2A13.5,13.5 0 0 0 7.3,25.7z" fill="#0f9d58"/><path d="M14,14L7.3,25.7A13.5,13.5 0 0 0 27.5,14z" fill="#ffcd40"/><path d="M14,14L27.5,14A13.5,13.5 0 0 0 14,0.5H14z" fill="#db4437" opacity="0"/><circle cx="14" cy="14" r="6.2" fill="#fff"/><circle cx="14" cy="14" r="4.8" fill="#4285f4"/></svg>
<!-- fusion -->
<svg class="a" style="left:1001px;top:1040px" width="30" height="30"><rect width="30" height="30" fill="#f0c596"/><path d="M9,4H22V9H14V13H20V18H14V26H9Z" fill="#e8862c"/><text x="20" y="27" font-family="Liberation Sans" font-size="5" fill="#e8862c">360</text></svg>
<!-- arduino -->
<svg class="a" style="left:1063px;top:1040px" width="30" height="30"><circle cx="15" cy="15" r="14" fill="#168a8c"/><g fill="none" stroke="#fff" stroke-width="2.2"><ellipse cx="10" cy="15" rx="4.5" ry="3.6"/><ellipse cx="20" cy="15" rx="4.5" ry="3.6"/></g></svg>
<!-- zoom -->
<svg class="a" style="left:1125px;top:1040px" width="30" height="30"><rect width="30" height="30" rx="8" fill="#2d8cff"/><rect x="6" y="10" width="13" height="10" rx="2" fill="#fff"/><path d="M19,13L25,9.5V20.5L19,17Z" fill="#fff"/></svg>
<!-- photos -->
<svg class="a" style="left:1187px;top:1041px" width="30" height="28"><rect width="30" height="28" fill="#1f7ed8"/><path d="M0,28L10,13L18,22L23,17L30,24V28Z" fill="#0b4fa0"/><circle cx="23" cy="7" r="3" fill="#fff"/></svg>
<div class="a" style="left:1178px;top:1077px;width:50px;height:3px;background:#76b9ed"></div>
<!-- tray -->
<svg class="a" style="left:1513px;top:1050px" width="18" height="10"><path d="M1,9L9,1L17,9" fill="none" stroke="#fff" stroke-width="1.4"/></svg>
<svg class="a" style="left:1544px;top:1045px" width="18" height="20"><g fill="none" stroke="#fff" stroke-width="1.3"><rect x="1" y="5" width="10" height="10" rx="1"/><path d="M11,8L16,5V15L11,12"/><path d="M3,2Q6,0 9,2M3,18Q6,20 9,18"/></g></svg>
<svg class="a" style="left:1571px;top:1047px" width="22" height="14"><path d="M5,13Q0,13 0.5,9Q1,6 4.5,6.5Q6,1.5 11,1.5Q15.5,1.5 16.5,5.5Q21.5,5.5 21.5,9.5Q21.5,13 17.5,13Z" fill="#ddd"/></svg>
<svg class="a" style="left:1601px;top:1049px" width="22" height="13"><rect x="0.8" y="0.8" width="18" height="11" fill="none" stroke="#fff" stroke-width="1.3"/><rect x="3" y="3" width="10" height="6.5" fill="#fff"/><rect x="19.5" y="4" width="2" height="5" fill="#fff"/></svg>
<svg class="a" style="left:1632px;top:1046px" width="20" height="18"><g fill="none" stroke="#fff" stroke-width="1.2"><path d="M1,17Q1,3 18,1"/><path d="M5,17Q5,7 16,5"/><path d="M9,17Q9,11 15,9.5"/></g><circle cx="15" cy="15.5" r="1.8" fill="#fff"/></svg>
<svg class="a" style="left:1661px;top:1045px" width="22" height="20"><path d="M1,7H5L10,2V18L5,13H1Z" fill="none" stroke="#fff" stroke-width="1.3"/><path d="M13,7Q15,10 13,13M16,4Q20,10 16,16M19,1.5Q24,10 19,18.5" fill="none" stroke="#fff" stroke-width="1.2"/></svg>
<svg class="a" style="left:1690px;top:1045px" width="22" height="22"><g fill="#fff"><path d="M6,1L11,4L6,7L1,4Z"/><path d="M16,1L21,4L16,7L11,4Z"/><path d="M11,4"/><path d="M16,7L21,10L16,13L11,10Z"/><path d="M6,7L11,10L6,13L1,10Z"/></g><rect x="1" y="12" width="10" height="10" rx="1" fill="#e81123"/><text x="6" y="20.5" font-family="Liberation Sans" font-weight="bold" font-size="9" fill="#fff" text-anchor="middle">3</text></svg>
<div class="a" style="left:1725px;top:1045px;font-size:15px;color:#fff;white-space:nowrap">ENG</div>
<div class="a" style="left:1771px;top:1036px;width:75px;text-align:center;font-size:14.5px;color:#fff">15:10</div>
<div class="a" style="left:1766px;top:1058px;width:85px;text-align:center;font-size:14.5px;color:#fff">18/04/2021</div>
<svg class="a" style="left:1866px;top:1043px" width="36" height="35"><rect x="1" y="1" width="20" height="16" fill="#fff"/><path d="M4,5H18M4,9H18M4,13H14" stroke="#2b2320" stroke-width="1.3"/><circle cx="22.5" cy="21" r="10.5" fill="#2b2320" stroke="#888" stroke-width="1"/><text x="22.5" y="26.5" font-family="Liberation Sans" font-size="14.5" fill="#fff" text-anchor="middle">22</text></svg>
<div class="a" style="left:1914px;top:1030px;width:1px;height:50px;background:#6a6a6a"></div>

</body></html>
